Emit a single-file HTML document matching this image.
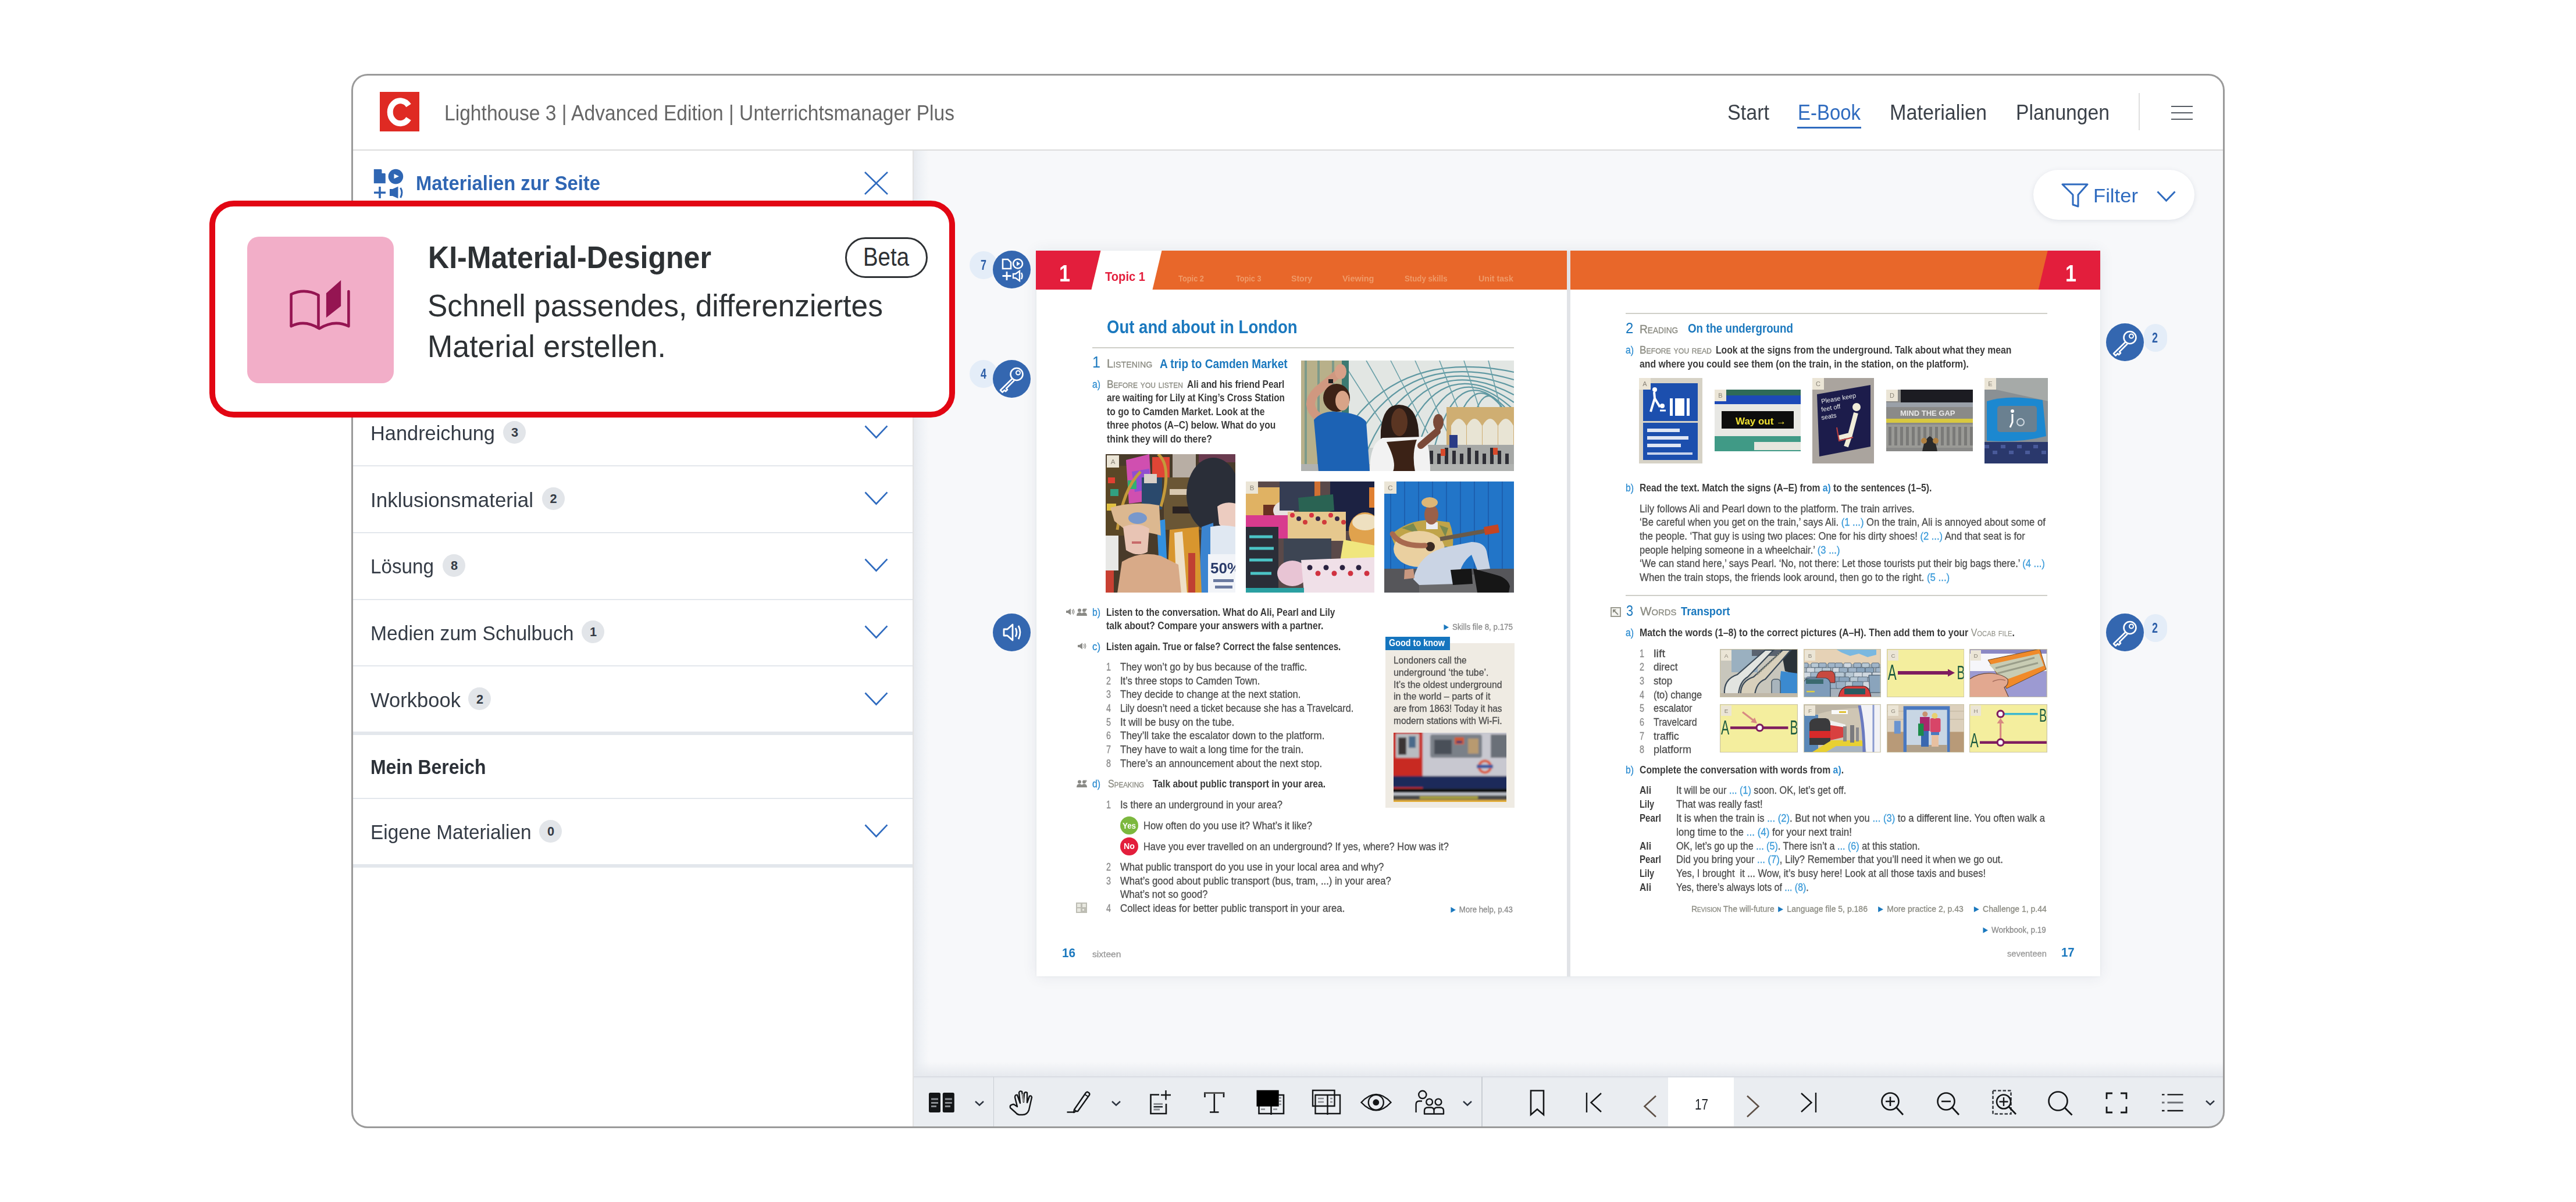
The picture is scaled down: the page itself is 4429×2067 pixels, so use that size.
<!DOCTYPE html>
<html><head><meta charset="utf-8"><style>
html,body{margin:0;padding:0;width:4429px;height:2067px;overflow:hidden;background:#fff;}
body{position:relative;font-family:"Liberation Sans",sans-serif;}
svg{position:absolute;overflow:visible}
</style></head><body>
<div style="position:absolute;left:604px;top:127px;width:3221px;height:1813px;background:#fff;border-radius:28px;"></div>
<div style="position:absolute;left:1571px;top:259px;width:2252px;height:1592px;background:#f7f8fa;"></div>
<div style="position:absolute;left:1571px;top:259px;width:26px;height:1592px;background:linear-gradient(90deg,#e6e9ee,#eef1f5 40%,rgba(247,248,250,0));"></div>
<div style="position:absolute;left:606px;top:257px;width:3217px;height:2px;background:#dcdcdc;"></div>
<div style="position:absolute;left:1569px;top:259px;width:2px;height:1679px;background:#e2e2e2;"></div>
<div style="position:absolute;left:1571px;top:1826px;width:2252px;height:25px;background:linear-gradient(180deg,rgba(230,234,239,0),#e6e9ee);"></div>
<div style="position:absolute;left:1571px;top:1851px;width:2252px;height:87px;background:#eaedf1;border-bottom-right-radius:26px;"></div>
<div style="position:absolute;left:1571px;top:1851px;width:2252px;height:1px;background:#d3d7dd;"></div>
<div style="position:absolute;left:1571px;top:1852px;width:2252px;height:2px;background:#e4e7ec;"></div>
<div style="position:absolute;left:653px;top:158px;width:68px;height:68px;background:#df2a23;"></div>
<svg style="left:653px;top:158px;" width="68" height="68" viewBox="0 0 68 68"><path d="M49.5 23.5 A17.5 19.5 0 1 0 49.5 46" fill="none" stroke="#fff" stroke-width="10"/></svg>
<div style="position:absolute;left:764px;top:176.80px;font-family:'Liberation Sans';font-size:36.23px;line-height:36.23px;font-weight:400;font-style:normal;color:#666666;white-space:pre;transform:scaleX(0.9281);transform-origin:0 0;">Lighthouse 3 | Advanced Edition | Unterrichtsmanager Plus</div>
<div style="position:absolute;left:2970px;top:176.39px;font-family:'Liberation Sans';font-size:36.96px;line-height:36.96px;font-weight:400;font-style:normal;color:#3b4149;white-space:pre;transform:scaleX(0.9225);transform-origin:0 0;">Start</div>
<div style="position:absolute;left:3091px;top:176.39px;font-family:'Liberation Sans';font-size:36.96px;line-height:36.96px;font-weight:400;font-style:normal;color:#2f6bbf;white-space:pre;transform:scaleX(0.8912);transform-origin:0 0;">E-Book</div>
<div style="position:absolute;left:3090px;top:218px;width:110px;height:3px;background:#2f6bbf;"></div>
<div style="position:absolute;left:3249px;top:176.39px;font-family:'Liberation Sans';font-size:36.96px;line-height:36.96px;font-weight:400;font-style:normal;color:#3b4149;white-space:pre;transform:scaleX(0.9239);transform-origin:0 0;">Materialien</div>
<div style="position:absolute;left:3466px;top:176.39px;font-family:'Liberation Sans';font-size:36.96px;line-height:36.96px;font-weight:400;font-style:normal;color:#3b4149;white-space:pre;transform:scaleX(0.9111);transform-origin:0 0;">Planungen</div>
<div style="position:absolute;left:3677px;top:160px;width:2px;height:64px;background:#dedede;"></div>
<div style="position:absolute;left:3733px;top:182px;width:37px;height:2px;background:#555b63;"></div>
<div style="position:absolute;left:3733px;top:193px;width:37px;height:2px;background:#555b63;"></div>
<div style="position:absolute;left:3733px;top:204px;width:37px;height:2px;background:#555b63;"></div>
<svg style="left:642px;top:291px;" width="53" height="51" viewBox="0 0 53 51"><path d="M0.8 0 H13.5 L20.8 8 V24.2 H0.8 Z" fill="#2f66b3"/><path d="M14.5 0 L21 7 H14.5 Z" fill="#fff"/><circle cx="38.4" cy="12.6" r="12.8" fill="#2f66b3"/><path d="M35.5 8 L44 12.2 L35.5 16.2 Z" fill="#fff"/><path d="M11 30 V50 M1 40.2 H21" stroke="#2f66b3" stroke-width="3.6"/><path d="M28 34 H33 L42.5 29.8 V50.2 L33 46 H28 Z" fill="#2f66b3"/><path d="M46.5 32 Q51.5 40 46.5 49" fill="none" stroke="#2f66b3" stroke-width="3"/></svg>
<div style="position:absolute;left:715px;top:298.10px;font-family:'Liberation Sans';font-size:35.65px;line-height:35.65px;font-weight:700;font-style:normal;color:#2f66b3;white-space:pre;transform:scaleX(0.9198);transform-origin:0 0;">Materialien zur Seite</div>
<svg style="left:1486px;top:295px;" width="41" height="40" viewBox="0 0 41 40"><path d="M1 1 L40 39 M40 1 L1 39" stroke="#2f6bbf" stroke-width="2.6"/></svg>
<div style="position:absolute;left:637.4px;top:728.23px;font-family:'Liberation Sans';font-size:34.78px;line-height:34.78px;font-weight:400;font-style:normal;color:#343b45;white-space:pre;transform:scaleX(0.9885);transform-origin:0 0;">Handreichung</div>
<div style="position:absolute;left:865px;top:723.5px;width:39px;height:39px;background:#e2e5e9;border-radius:50%;"></div>
<div style="position:absolute;left:879px;top:732.82px;font-family:'Liberation Sans';font-size:21.74px;line-height:21.74px;font-weight:700;font-style:normal;color:#343b45;white-space:pre;">3</div>
<svg style="left:1486px;top:731px;" width="41" height="24" viewBox="0 0 41 24"><path d="M1.5 1.5 L20.5 21.5 L39.5 1.5" fill="none" stroke="#2f6bbf" stroke-width="2.6"/></svg>
<div style="position:absolute;left:637.4px;top:842.63px;font-family:'Liberation Sans';font-size:34.78px;line-height:34.78px;font-weight:400;font-style:normal;color:#343b45;white-space:pre;transform:scaleX(1.0063);transform-origin:0 0;">Inklusionsmaterial</div>
<div style="position:absolute;left:931.5px;top:837.9px;width:39px;height:39px;background:#e2e5e9;border-radius:50%;"></div>
<div style="position:absolute;left:945.5px;top:847.22px;font-family:'Liberation Sans';font-size:21.74px;line-height:21.74px;font-weight:700;font-style:normal;color:#343b45;white-space:pre;">2</div>
<svg style="left:1486px;top:845.4px;" width="41" height="24" viewBox="0 0 41 24"><path d="M1.5 1.5 L20.5 21.5 L39.5 1.5" fill="none" stroke="#2f6bbf" stroke-width="2.6"/></svg>
<div style="position:absolute;left:637.4px;top:957.23px;font-family:'Liberation Sans';font-size:34.78px;line-height:34.78px;font-weight:400;font-style:normal;color:#343b45;white-space:pre;transform:scaleX(0.9556);transform-origin:0 0;">Lösung</div>
<div style="position:absolute;left:761px;top:952.5px;width:39px;height:39px;background:#e2e5e9;border-radius:50%;"></div>
<div style="position:absolute;left:775px;top:961.82px;font-family:'Liberation Sans';font-size:21.74px;line-height:21.74px;font-weight:700;font-style:normal;color:#343b45;white-space:pre;">8</div>
<svg style="left:1486px;top:960px;" width="41" height="24" viewBox="0 0 41 24"><path d="M1.5 1.5 L20.5 21.5 L39.5 1.5" fill="none" stroke="#2f6bbf" stroke-width="2.6"/></svg>
<div style="position:absolute;left:637.4px;top:1071.73px;font-family:'Liberation Sans';font-size:34.78px;line-height:34.78px;font-weight:400;font-style:normal;color:#343b45;white-space:pre;transform:scaleX(0.9671);transform-origin:0 0;">Medien zum Schulbuch</div>
<div style="position:absolute;left:1000px;top:1067.0px;width:39px;height:39px;background:#e2e5e9;border-radius:50%;"></div>
<div style="position:absolute;left:1014px;top:1076.32px;font-family:'Liberation Sans';font-size:21.74px;line-height:21.74px;font-weight:700;font-style:normal;color:#343b45;white-space:pre;">1</div>
<svg style="left:1486px;top:1074.5px;" width="41" height="24" viewBox="0 0 41 24"><path d="M1.5 1.5 L20.5 21.5 L39.5 1.5" fill="none" stroke="#2f6bbf" stroke-width="2.6"/></svg>
<div style="position:absolute;left:637.4px;top:1186.93px;font-family:'Liberation Sans';font-size:34.78px;line-height:34.78px;font-weight:400;font-style:normal;color:#343b45;white-space:pre;transform:scaleX(0.9944);transform-origin:0 0;">Workbook</div>
<div style="position:absolute;left:805px;top:1182.2px;width:39px;height:39px;background:#e2e5e9;border-radius:50%;"></div>
<div style="position:absolute;left:819px;top:1191.52px;font-family:'Liberation Sans';font-size:21.74px;line-height:21.74px;font-weight:700;font-style:normal;color:#343b45;white-space:pre;">2</div>
<svg style="left:1486px;top:1189.7px;" width="41" height="24" viewBox="0 0 41 24"><path d="M1.5 1.5 L20.5 21.5 L39.5 1.5" fill="none" stroke="#2f6bbf" stroke-width="2.6"/></svg>
<div style="position:absolute;left:606px;top:685px;width:963px;height:2px;background:#e3e7ec;"></div>
<div style="position:absolute;left:606px;top:800px;width:963px;height:2px;background:#e3e7ec;"></div>
<div style="position:absolute;left:606px;top:915px;width:963px;height:2px;background:#e3e7ec;"></div>
<div style="position:absolute;left:606px;top:1030px;width:963px;height:2px;background:#e3e7ec;"></div>
<div style="position:absolute;left:606px;top:1144px;width:963px;height:2px;background:#e3e7ec;"></div>
<div style="position:absolute;left:606px;top:1258px;width:963px;height:6px;background:#e3e7ec;"></div>
<div style="position:absolute;left:637.4px;top:1302.23px;font-family:'Liberation Sans';font-size:34.78px;line-height:34.78px;font-weight:700;font-style:normal;color:#2b3037;white-space:pre;transform:scaleX(0.9178);transform-origin:0 0;">Mein Bereich</div>
<div style="position:absolute;left:606px;top:1372px;width:963px;height:2px;background:#e3e7ec;"></div>
<div style="position:absolute;left:637.4px;top:1414.23px;font-family:'Liberation Sans';font-size:34.78px;line-height:34.78px;font-weight:400;font-style:normal;color:#343b45;white-space:pre;transform:scaleX(0.9605);transform-origin:0 0;">Eigene Materialien</div>
<div style="position:absolute;left:927px;top:1409.5px;width:39px;height:39px;background:#e2e5e9;border-radius:50%;"></div>
<div style="position:absolute;left:941px;top:1418.82px;font-family:'Liberation Sans';font-size:21.74px;line-height:21.74px;font-weight:700;font-style:normal;color:#343b45;white-space:pre;">0</div>
<svg style="left:1486px;top:1417px;" width="41" height="24" viewBox="0 0 41 24"><path d="M1.5 1.5 L20.5 21.5 L39.5 1.5" fill="none" stroke="#2f6bbf" stroke-width="2.6"/></svg>
<div style="position:absolute;left:606px;top:1486px;width:963px;height:6px;background:#e3e7ec;"></div>
<div style="position:absolute;left:1781.5px;top:431.5px;width:1829.2px;height:1247.8px;background:#e1e3e7;box-shadow:0 0 3px rgba(30,40,60,0.07),0 0 24px rgba(40,60,90,0.09);"></div>
<div style="position:absolute;left:1781.5px;top:431.5px;width:912px;height:1247.8px;background:#fff;"></div>
<div style="position:absolute;left:2699.5px;top:431.5px;width:911.2px;height:1247.8px;background:#fff;"></div>
<svg style="left:1781px;top:431px;" width="913" height="67" viewBox="0 0 913 67"><rect x="0" y="0" width="913" height="67" fill="#e8672a"/><polygon points="0,0 111.5,0 95.5,67 0,67" fill="#e31e3c"/><polygon points="111.5,0 216.5,0 200.5,67 95.5,67" fill="#fff"/></svg>
<div style="position:absolute;left:1821px;top:451.22px;font-family:'Liberation Sans';font-size:39.86px;line-height:39.86px;font-weight:700;font-style:normal;color:#fff;white-space:pre;transform:scaleX(0.8569);transform-origin:0 0;">1</div>
<div style="position:absolute;left:1900px;top:465.11px;font-family:'Liberation Sans';font-size:22.46px;line-height:22.46px;font-weight:700;font-style:normal;color:#e31e3c;white-space:pre;transform:scaleX(0.8968);transform-origin:0 0;">Topic 1</div>
<div style="position:absolute;left:2026px;top:471.88px;font-family:'Liberation Sans';font-size:14.49px;line-height:14.49px;font-weight:700;font-style:normal;color:#ef9a68;white-space:pre;transform:scaleX(0.8864);transform-origin:0 0;">Topic 2</div>
<div style="position:absolute;left:2124.5px;top:471.88px;font-family:'Liberation Sans';font-size:14.49px;line-height:14.49px;font-weight:700;font-style:normal;color:#ef9a68;white-space:pre;transform:scaleX(0.8763);transform-origin:0 0;">Topic 3</div>
<div style="position:absolute;left:2220px;top:471.88px;font-family:'Liberation Sans';font-size:14.49px;line-height:14.49px;font-weight:700;font-style:normal;color:#ef9a68;white-space:pre;transform:scaleX(0.9722);transform-origin:0 0;">Story</div>
<div style="position:absolute;left:2307.7px;top:471.88px;font-family:'Liberation Sans';font-size:14.49px;line-height:14.49px;font-weight:700;font-style:normal;color:#ef9a68;white-space:pre;transform:scaleX(0.9969);transform-origin:0 0;">Viewing</div>
<div style="position:absolute;left:2414.5px;top:471.88px;font-family:'Liberation Sans';font-size:14.49px;line-height:14.49px;font-weight:700;font-style:normal;color:#ef9a68;white-space:pre;transform:scaleX(0.9130);transform-origin:0 0;">Study skills</div>
<div style="position:absolute;left:2541.7px;top:471.88px;font-family:'Liberation Sans';font-size:14.49px;line-height:14.49px;font-weight:700;font-style:normal;color:#ef9a68;white-space:pre;transform:scaleX(0.9792);transform-origin:0 0;">Unit task</div>
<svg style="left:2700px;top:431px;" width="911" height="67" viewBox="0 0 911 67"><rect x="0" y="0" width="911" height="67" fill="#e8672a"/><polygon points="820.7,0 911,0 911,67 804.7,67" fill="#e31e3c"/></svg>
<div style="position:absolute;left:3551px;top:451.22px;font-family:'Liberation Sans';font-size:39.86px;line-height:39.86px;font-weight:700;font-style:normal;color:#fff;white-space:pre;transform:scaleX(0.8569);transform-origin:0 0;">1</div>
<div style="position:absolute;left:1667px;top:431.5px;width:48px;height:48px;background:#e4edf8;border-radius:50%;"></div>
<div style="position:absolute;left:1686px;top:444.59px;font-family:'Liberation Sans';font-size:23.19px;line-height:23.19px;font-weight:700;font-style:normal;color:#2c5ea8;white-space:pre;transform:scaleX(0.7748);transform-origin:0 0;">7</div>
<div style="position:absolute;left:1707px;top:431px;width:65px;height:65px;background:#3467b0;border-radius:50%;"></div>
<svg style="left:1707px;top:431px;" width="65" height="65" viewBox="0 0 65 65"><path d="M17 15 H26 L31 20 V31 H17 Z" fill="none" stroke="#fff" stroke-width="2.6"/><circle cx="43" cy="22.5" r="8" fill="none" stroke="#fff" stroke-width="2.6"/><path d="M41 18.5 L47 22.5 L41 26.5 Z" fill="#fff"/><path d="M24 36 V51 M16.5 43.5 H31.5" stroke="#fff" stroke-width="2.8"/><path d="M35 40 H39 L46 35 V52 L39 47 H35 Z" fill="none" stroke="#fff" stroke-width="2.4"/><path d="M49 38 Q52 43.5 49 49" fill="none" stroke="#fff" stroke-width="2.4"/></svg>
<div style="position:absolute;left:1667px;top:619px;width:48px;height:48px;background:#e4edf8;border-radius:50%;"></div>
<div style="position:absolute;left:1686px;top:632.09px;font-family:'Liberation Sans';font-size:23.19px;line-height:23.19px;font-weight:700;font-style:normal;color:#2c5ea8;white-space:pre;transform:scaleX(0.7748);transform-origin:0 0;">4</div>
<div style="position:absolute;left:1707px;top:619px;width:65px;height:65px;background:#3467b0;border-radius:50%;"></div>
<svg style="left:1707px;top:619px;" width="65" height="65" viewBox="0 0 65 65"><circle cx="41" cy="24.5" r="10.5" fill="none" stroke="#fff" stroke-width="2.6"/><circle cx="43.5" cy="22" r="3.5" fill="none" stroke="#fff" stroke-width="2"/><path d="M33.5 32 L13 52 L16.5 55.5 L20 52 L22 54 L25 51 L23 49 L37 35" fill="none" stroke="#fff" stroke-width="2.6" stroke-linejoin="round"/></svg>
<div style="position:absolute;left:1707px;top:1055px;width:65px;height:65px;background:#3467b0;border-radius:50%;"></div>
<svg style="left:1707px;top:1055px;" width="65" height="65" viewBox="0 0 65 65"><path d="M19 27 H25 L34 19 V46 L25 38 H19 Z" fill="none" stroke="#fff" stroke-width="2.8" stroke-linejoin="round"/><path d="M39 25 Q43 32.5 39 40 M44 21 Q50 32.5 44 44" fill="none" stroke="#fff" stroke-width="2.8"/></svg>
<div style="position:absolute;left:3685.6px;top:556.7px;width:40px;height:48px;background:#e4edf8;border-radius:20px;"></div>
<div style="position:absolute;left:3699.6px;top:569.79px;font-family:'Liberation Sans';font-size:23.19px;line-height:23.19px;font-weight:700;font-style:normal;color:#2c5ea8;white-space:pre;transform:scaleX(0.7748);transform-origin:0 0;">2</div>
<div style="position:absolute;left:3620.5px;top:556px;width:65px;height:65px;background:#3467b0;border-radius:50%;"></div>
<svg style="left:3620.5px;top:556px;" width="65" height="65" viewBox="0 0 65 65"><circle cx="41" cy="24.5" r="10.5" fill="none" stroke="#fff" stroke-width="2.6"/><circle cx="43.5" cy="22" r="3.5" fill="none" stroke="#fff" stroke-width="2"/><path d="M33.5 32 L13 52 L16.5 55.5 L20 52 L22 54 L25 51 L23 49 L37 35" fill="none" stroke="#fff" stroke-width="2.6" stroke-linejoin="round"/></svg>
<div style="position:absolute;left:3685.6px;top:1056px;width:40px;height:48px;background:#e4edf8;border-radius:20px;"></div>
<div style="position:absolute;left:3699.6px;top:1069.09px;font-family:'Liberation Sans';font-size:23.19px;line-height:23.19px;font-weight:700;font-style:normal;color:#2c5ea8;white-space:pre;transform:scaleX(0.7748);transform-origin:0 0;">2</div>
<div style="position:absolute;left:3620.5px;top:1055px;width:65px;height:65px;background:#3467b0;border-radius:50%;"></div>
<svg style="left:3620.5px;top:1055px;" width="65" height="65" viewBox="0 0 65 65"><circle cx="41" cy="24.5" r="10.5" fill="none" stroke="#fff" stroke-width="2.6"/><circle cx="43.5" cy="22" r="3.5" fill="none" stroke="#fff" stroke-width="2"/><path d="M33.5 32 L13 52 L16.5 55.5 L20 52 L22 54 L25 51 L23 49 L37 35" fill="none" stroke="#fff" stroke-width="2.6" stroke-linejoin="round"/></svg>
<div style="position:absolute;left:1902.6px;top:546.54px;font-family:'Liberation Sans';font-size:31.59px;line-height:31.59px;font-weight:700;font-style:normal;color:#1a78be;white-space:pre;transform:scaleX(0.8728);transform-origin:0 0;">Out and about in London</div>
<div style="position:absolute;left:1877.7px;top:596.6px;width:725px;height:2px;background:#cfcfc8;"></div>
<div style="position:absolute;left:1877.7px;top:609.39px;font-family:'Liberation Sans';font-size:27.54px;line-height:27.54px;font-weight:400;font-style:normal;color:#1a78be;white-space:pre;transform:scaleX(0.9143);transform-origin:0 0;">1</div>
<div style="position:absolute;left:1902.6px;top:616.05px;-webkit-text-stroke:0.3px currentColor;font-family:'Liberation Sans';font-size:19.71px;line-height:19.71px;font-weight:400;font-style:normal;color:#8a8a80;white-space:pre;transform:scaleX(1.0151);transform-origin:0 0;font-variant:small-caps;">Listening</div>
<div style="position:absolute;left:1994px;top:614.81px;font-family:'Liberation Sans';font-size:21.16px;line-height:21.16px;font-weight:700;font-style:normal;color:#1a78be;white-space:pre;transform:scaleX(0.9010);transform-origin:0 0;">A trip to Camden Market</div>
<div style="position:absolute;left:1877.7px;top:652.21px;-webkit-text-stroke:0.3px currentColor;font-family:'Liberation Sans';font-size:18.70px;line-height:18.70px;font-weight:400;font-style:normal;color:#2b8bd0;white-space:pre;transform:scaleX(0.8421);transform-origin:0 0;">a)</div>
<div style="position:absolute;left:1902.6px;top:652.21px;-webkit-text-stroke:0.3px currentColor;font-family:'Liberation Sans';font-size:18.70px;line-height:18.70px;font-weight:400;font-style:normal;color:#8a8a80;white-space:pre;transform:scaleX(0.9267);transform-origin:0 0;font-variant:small-caps;">Before you listen</div>
<div style="position:absolute;left:2041px;top:652.21px;font-family:'Liberation Sans';font-size:18.70px;line-height:18.70px;font-weight:700;font-style:normal;color:#3a3a3a;white-space:pre;transform:scaleX(0.8267);transform-origin:0 0;">Ali and his friend Pearl</div>
<div style="position:absolute;left:1902.6px;top:675.11px;font-family:'Liberation Sans';font-size:18.70px;line-height:18.70px;font-weight:700;font-style:normal;color:#3a3a3a;white-space:pre;transform:scaleX(0.8150);transform-origin:0 0;">are waiting for Lily at King’s Cross Station</div>
<div style="position:absolute;left:1902.6px;top:698.91px;font-family:'Liberation Sans';font-size:18.70px;line-height:18.70px;font-weight:700;font-style:normal;color:#3a3a3a;white-space:pre;transform:scaleX(0.8405);transform-origin:0 0;">to go to Camden Market. Look at the</div>
<div style="position:absolute;left:1902.6px;top:722.41px;font-family:'Liberation Sans';font-size:18.70px;line-height:18.70px;font-weight:700;font-style:normal;color:#3a3a3a;white-space:pre;transform:scaleX(0.8336);transform-origin:0 0;">three photos (A–C) below. What do you</div>
<div style="position:absolute;left:1902.6px;top:745.91px;font-family:'Liberation Sans';font-size:18.70px;line-height:18.70px;font-weight:700;font-style:normal;color:#3a3a3a;white-space:pre;transform:scaleX(0.8462);transform-origin:0 0;">think they will do there?</div>
<div style="position:absolute;left:1877.5px;top:1043.88px;-webkit-text-stroke:0.3px currentColor;font-family:'Liberation Sans';font-size:18.26px;line-height:18.26px;font-weight:400;font-style:normal;color:#2b8bd0;white-space:pre;transform:scaleX(0.8624);transform-origin:0 0;">b)</div>
<div style="position:absolute;left:1901.7px;top:1043.88px;font-family:'Liberation Sans';font-size:18.26px;line-height:18.26px;font-weight:700;font-style:normal;color:#3a3a3a;white-space:pre;transform:scaleX(0.8444);transform-origin:0 0;">Listen to the conversation. What do Ali, Pearl and Lily</div>
<div style="position:absolute;left:1901.7px;top:1067.28px;font-family:'Liberation Sans';font-size:18.26px;line-height:18.26px;font-weight:700;font-style:normal;color:#3a3a3a;white-space:pre;transform:scaleX(0.8620);transform-origin:0 0;">talk about? Compare your answers with a partner.</div>
<div style="position:absolute;left:2480px;top:1069.87px;-webkit-text-stroke:0.3px currentColor;font-family:'Liberation Sans';font-size:15.22px;line-height:15.22px;font-weight:400;font-style:normal;color:#8a8a8a;white-space:pre;transform:scaleX(0.8784);transform-origin:0 0;"><span style="color:#1a78be">►</span> Skills file 8, p.175</div>
<div style="position:absolute;left:1877.5px;top:1102.88px;-webkit-text-stroke:0.3px currentColor;font-family:'Liberation Sans';font-size:18.26px;line-height:18.26px;font-weight:400;font-style:normal;color:#2b8bd0;white-space:pre;transform:scaleX(0.9209);transform-origin:0 0;">c)</div>
<div style="position:absolute;left:1901.7px;top:1102.88px;font-family:'Liberation Sans';font-size:18.26px;line-height:18.26px;font-weight:700;font-style:normal;color:#3a3a3a;white-space:pre;transform:scaleX(0.8319);transform-origin:0 0;">Listen again. True or false? Correct the false sentences.</div>
<div style="position:absolute;left:1902.3px;top:1137.98px;-webkit-text-stroke:0.3px currentColor;font-family:'Liberation Sans';font-size:18.26px;line-height:18.26px;font-weight:400;font-style:normal;color:#8a8a8a;white-space:pre;transform:scaleX(0.7877);transform-origin:0 0;">1</div>
<div style="position:absolute;left:1925.6px;top:1137.98px;-webkit-text-stroke:0.3px currentColor;font-family:'Liberation Sans';font-size:18.26px;line-height:18.26px;font-weight:400;font-style:normal;color:#4c4c4c;white-space:pre;transform:scaleX(0.9139);transform-origin:0 0;">They won’t go by bus because of the traffic.</div>
<div style="position:absolute;left:1902.3px;top:1161.64px;-webkit-text-stroke:0.3px currentColor;font-family:'Liberation Sans';font-size:18.26px;line-height:18.26px;font-weight:400;font-style:normal;color:#8a8a8a;white-space:pre;transform:scaleX(0.7877);transform-origin:0 0;">2</div>
<div style="position:absolute;left:1925.6px;top:1161.64px;-webkit-text-stroke:0.3px currentColor;font-family:'Liberation Sans';font-size:18.26px;line-height:18.26px;font-weight:400;font-style:normal;color:#4c4c4c;white-space:pre;transform:scaleX(0.9068);transform-origin:0 0;">It’s three stops to Camden Town.</div>
<div style="position:absolute;left:1902.3px;top:1185.30px;-webkit-text-stroke:0.3px currentColor;font-family:'Liberation Sans';font-size:18.26px;line-height:18.26px;font-weight:400;font-style:normal;color:#8a8a8a;white-space:pre;transform:scaleX(0.7877);transform-origin:0 0;">3</div>
<div style="position:absolute;left:1925.6px;top:1185.30px;-webkit-text-stroke:0.3px currentColor;font-family:'Liberation Sans';font-size:18.26px;line-height:18.26px;font-weight:400;font-style:normal;color:#4c4c4c;white-space:pre;transform:scaleX(0.9160);transform-origin:0 0;">They decide to change at the next station.</div>
<div style="position:absolute;left:1902.3px;top:1208.96px;-webkit-text-stroke:0.3px currentColor;font-family:'Liberation Sans';font-size:18.26px;line-height:18.26px;font-weight:400;font-style:normal;color:#8a8a8a;white-space:pre;transform:scaleX(0.7877);transform-origin:0 0;">4</div>
<div style="position:absolute;left:1925.6px;top:1208.96px;-webkit-text-stroke:0.3px currentColor;font-family:'Liberation Sans';font-size:18.26px;line-height:18.26px;font-weight:400;font-style:normal;color:#4c4c4c;white-space:pre;transform:scaleX(0.8847);transform-origin:0 0;">Lily doesn’t need a ticket because she has a Travelcard.</div>
<div style="position:absolute;left:1902.3px;top:1232.62px;-webkit-text-stroke:0.3px currentColor;font-family:'Liberation Sans';font-size:18.26px;line-height:18.26px;font-weight:400;font-style:normal;color:#8a8a8a;white-space:pre;transform:scaleX(0.7877);transform-origin:0 0;">5</div>
<div style="position:absolute;left:1925.6px;top:1232.62px;-webkit-text-stroke:0.3px currentColor;font-family:'Liberation Sans';font-size:18.26px;line-height:18.26px;font-weight:400;font-style:normal;color:#4c4c4c;white-space:pre;transform:scaleX(0.9303);transform-origin:0 0;">It will be busy on the tube.</div>
<div style="position:absolute;left:1902.3px;top:1256.28px;-webkit-text-stroke:0.3px currentColor;font-family:'Liberation Sans';font-size:18.26px;line-height:18.26px;font-weight:400;font-style:normal;color:#8a8a8a;white-space:pre;transform:scaleX(0.7877);transform-origin:0 0;">6</div>
<div style="position:absolute;left:1925.6px;top:1256.28px;-webkit-text-stroke:0.3px currentColor;font-family:'Liberation Sans';font-size:18.26px;line-height:18.26px;font-weight:400;font-style:normal;color:#4c4c4c;white-space:pre;transform:scaleX(0.9312);transform-origin:0 0;">They’ll take the escalator down to the platform.</div>
<div style="position:absolute;left:1902.3px;top:1279.94px;-webkit-text-stroke:0.3px currentColor;font-family:'Liberation Sans';font-size:18.26px;line-height:18.26px;font-weight:400;font-style:normal;color:#8a8a8a;white-space:pre;transform:scaleX(0.7877);transform-origin:0 0;">7</div>
<div style="position:absolute;left:1925.6px;top:1279.94px;-webkit-text-stroke:0.3px currentColor;font-family:'Liberation Sans';font-size:18.26px;line-height:18.26px;font-weight:400;font-style:normal;color:#4c4c4c;white-space:pre;transform:scaleX(0.9275);transform-origin:0 0;">They have to wait a long time for the train.</div>
<div style="position:absolute;left:1902.3px;top:1303.60px;-webkit-text-stroke:0.3px currentColor;font-family:'Liberation Sans';font-size:18.26px;line-height:18.26px;font-weight:400;font-style:normal;color:#8a8a8a;white-space:pre;transform:scaleX(0.7877);transform-origin:0 0;">8</div>
<div style="position:absolute;left:1925.6px;top:1303.60px;-webkit-text-stroke:0.3px currentColor;font-family:'Liberation Sans';font-size:18.26px;line-height:18.26px;font-weight:400;font-style:normal;color:#4c4c4c;white-space:pre;transform:scaleX(0.9207);transform-origin:0 0;">There’s an announcement about the next stop.</div>
<div style="position:absolute;left:2381.5px;top:1105.5px;width:222.5px;height:283.5px;background:#efebe3;"></div>
<div style="position:absolute;left:2381.5px;top:1095.2px;width:111.8px;height:22.4px;background:#1575be;"></div>
<div style="position:absolute;left:2388px;top:1097.63px;font-family:'Liberation Sans';font-size:16.67px;line-height:16.67px;font-weight:700;font-style:normal;color:#fff;white-space:pre;transform:scaleX(0.8646);transform-origin:0 0;">Good to know</div>
<div style="position:absolute;left:2395.5px;top:1127.71px;-webkit-text-stroke:0.3px currentColor;font-family:'Liberation Sans';font-size:16.81px;line-height:16.81px;font-weight:400;font-style:normal;color:#4c4c4c;white-space:pre;transform:scaleX(0.9142);transform-origin:0 0;">Londoners call the</div>
<div style="position:absolute;left:2395.5px;top:1148.63px;-webkit-text-stroke:0.3px currentColor;font-family:'Liberation Sans';font-size:16.81px;line-height:16.81px;font-weight:400;font-style:normal;color:#4c4c4c;white-space:pre;transform:scaleX(0.9463);transform-origin:0 0;">underground ‘the tube’.</div>
<div style="position:absolute;left:2395.5px;top:1169.55px;-webkit-text-stroke:0.3px currentColor;font-family:'Liberation Sans';font-size:16.81px;line-height:16.81px;font-weight:400;font-style:normal;color:#4c4c4c;white-space:pre;transform:scaleX(0.9391);transform-origin:0 0;">It’s the oldest underground</div>
<div style="position:absolute;left:2395.5px;top:1190.47px;-webkit-text-stroke:0.3px currentColor;font-family:'Liberation Sans';font-size:16.81px;line-height:16.81px;font-weight:400;font-style:normal;color:#4c4c4c;white-space:pre;transform:scaleX(0.9588);transform-origin:0 0;">in the world – parts of it</div>
<div style="position:absolute;left:2395.5px;top:1211.39px;-webkit-text-stroke:0.3px currentColor;font-family:'Liberation Sans';font-size:16.81px;line-height:16.81px;font-weight:400;font-style:normal;color:#4c4c4c;white-space:pre;transform:scaleX(0.9177);transform-origin:0 0;">are from 1863! Today it has</div>
<div style="position:absolute;left:2395.5px;top:1232.31px;-webkit-text-stroke:0.3px currentColor;font-family:'Liberation Sans';font-size:16.81px;line-height:16.81px;font-weight:400;font-style:normal;color:#4c4c4c;white-space:pre;transform:scaleX(0.9208);transform-origin:0 0;">modern stations with Wi-Fi.</div>
<div style="position:absolute;left:1877.5px;top:1339.48px;-webkit-text-stroke:0.3px currentColor;font-family:'Liberation Sans';font-size:18.26px;line-height:18.26px;font-weight:400;font-style:normal;color:#2b8bd0;white-space:pre;transform:scaleX(0.8624);transform-origin:0 0;">d)</div>
<div style="position:absolute;left:1905.4px;top:1339.48px;-webkit-text-stroke:0.3px currentColor;font-family:'Liberation Sans';font-size:18.26px;line-height:18.26px;font-weight:400;font-style:normal;color:#8a8a80;white-space:pre;transform:scaleX(0.8856);transform-origin:0 0;font-variant:small-caps;">Speaking</div>
<div style="position:absolute;left:1982px;top:1339.48px;font-family:'Liberation Sans';font-size:18.26px;line-height:18.26px;font-weight:700;font-style:normal;color:#3a3a3a;white-space:pre;transform:scaleX(0.8547);transform-origin:0 0;">Talk about public transport in your area.</div>
<div style="position:absolute;left:1902.3px;top:1375.18px;-webkit-text-stroke:0.3px currentColor;font-family:'Liberation Sans';font-size:18.26px;line-height:18.26px;font-weight:400;font-style:normal;color:#8a8a8a;white-space:pre;transform:scaleX(0.7877);transform-origin:0 0;">1</div>
<div style="position:absolute;left:1925.6px;top:1375.18px;-webkit-text-stroke:0.3px currentColor;font-family:'Liberation Sans';font-size:18.26px;line-height:18.26px;font-weight:400;font-style:normal;color:#4c4c4c;white-space:pre;transform:scaleX(0.9106);transform-origin:0 0;">Is there an underground in your area?</div>
<div style="position:absolute;left:1925.6px;top:1403.9px;width:31px;height:31px;background:#7cb83e;border-radius:50%;"></div>
<div style="position:absolute;left:1929.5px;top:1411.87px;font-family:'Liberation Sans';font-size:15.22px;line-height:15.22px;font-weight:700;font-style:normal;color:#fff;white-space:pre;transform:scaleX(0.8762);transform-origin:0 0;">Yes</div>
<div style="position:absolute;left:1966px;top:1410.88px;-webkit-text-stroke:0.3px currentColor;font-family:'Liberation Sans';font-size:18.26px;line-height:18.26px;font-weight:400;font-style:normal;color:#4c4c4c;white-space:pre;transform:scaleX(0.9114);transform-origin:0 0;">How often do you use it? What’s it like?</div>
<div style="position:absolute;left:1925.6px;top:1439.5px;width:31px;height:31px;background:#e31e3c;border-radius:50%;"></div>
<div style="position:absolute;left:1931.5px;top:1447.47px;font-family:'Liberation Sans';font-size:15.22px;line-height:15.22px;font-weight:700;font-style:normal;color:#fff;white-space:pre;transform:scaleX(0.9361);transform-origin:0 0;">No</div>
<div style="position:absolute;left:1966px;top:1446.58px;-webkit-text-stroke:0.3px currentColor;font-family:'Liberation Sans';font-size:18.26px;line-height:18.26px;font-weight:400;font-style:normal;color:#4c4c4c;white-space:pre;transform:scaleX(0.8997);transform-origin:0 0;">Have you ever travelled on an underground? If yes, where? How was it?</div>
<div style="position:absolute;left:1902.3px;top:1481.68px;-webkit-text-stroke:0.3px currentColor;font-family:'Liberation Sans';font-size:18.26px;line-height:18.26px;font-weight:400;font-style:normal;color:#8a8a8a;white-space:pre;transform:scaleX(0.7877);transform-origin:0 0;">2</div>
<div style="position:absolute;left:1925.6px;top:1481.68px;-webkit-text-stroke:0.3px currentColor;font-family:'Liberation Sans';font-size:18.26px;line-height:18.26px;font-weight:400;font-style:normal;color:#4c4c4c;white-space:pre;transform:scaleX(0.9177);transform-origin:0 0;">What public transport do you use in your local area and why?</div>
<div style="position:absolute;left:1902.3px;top:1505.58px;-webkit-text-stroke:0.3px currentColor;font-family:'Liberation Sans';font-size:18.26px;line-height:18.26px;font-weight:400;font-style:normal;color:#8a8a8a;white-space:pre;transform:scaleX(0.7877);transform-origin:0 0;">3</div>
<div style="position:absolute;left:1925.6px;top:1505.58px;-webkit-text-stroke:0.3px currentColor;font-family:'Liberation Sans';font-size:18.26px;line-height:18.26px;font-weight:400;font-style:normal;color:#4c4c4c;white-space:pre;transform:scaleX(0.9099);transform-origin:0 0;">What’s good about public transport (bus, tram, ...) in your area?</div>
<div style="position:absolute;left:1925.6px;top:1528.88px;-webkit-text-stroke:0.3px currentColor;font-family:'Liberation Sans';font-size:18.26px;line-height:18.26px;font-weight:400;font-style:normal;color:#4c4c4c;white-space:pre;transform:scaleX(0.9057);transform-origin:0 0;">What’s not so good?</div>
<div style="position:absolute;left:1902.3px;top:1553.08px;-webkit-text-stroke:0.3px currentColor;font-family:'Liberation Sans';font-size:18.26px;line-height:18.26px;font-weight:400;font-style:normal;color:#8a8a8a;white-space:pre;transform:scaleX(0.7877);transform-origin:0 0;">4</div>
<div style="position:absolute;left:1925.6px;top:1553.08px;-webkit-text-stroke:0.3px currentColor;font-family:'Liberation Sans';font-size:18.26px;line-height:18.26px;font-weight:400;font-style:normal;color:#4c4c4c;white-space:pre;transform:scaleX(0.9223);transform-origin:0 0;">Collect ideas for better public transport in your area.</div>
<div style="position:absolute;left:2492px;top:1555.67px;-webkit-text-stroke:0.3px currentColor;font-family:'Liberation Sans';font-size:15.22px;line-height:15.22px;font-weight:400;font-style:normal;color:#8a8a8a;white-space:pre;transform:scaleX(0.8716);transform-origin:0 0;"><span style="color:#1a78be">►</span> More help, p.43</div>
<svg style="left:1850.4px;top:1552.3px;" width="19" height="18" viewBox="0 0 19 18"><rect width="19" height="18" fill="#bdbdb4"/><rect x="2" y="2" width="6" height="6" fill="#e8e8e0"/><rect x="11" y="2" width="6" height="6" fill="#e8e8e0"/><rect x="2" y="10" width="6" height="6" fill="#e8e8e0"/><rect x="11" y="11" width="3" height="3" fill="#e8e8e0"/></svg>
<div style="position:absolute;left:1825.6px;top:1627.82px;font-family:'Liberation Sans';font-size:21.74px;line-height:21.74px;font-weight:700;font-style:normal;color:#1a78be;white-space:pre;transform:scaleX(0.9509);transform-origin:0 0;">16</div>
<div style="position:absolute;left:1877.5px;top:1633.98px;-webkit-text-stroke:0.3px currentColor;font-family:'Liberation Sans';font-size:14.49px;line-height:14.49px;font-weight:400;font-style:normal;color:#9a9a9a;white-space:pre;transform:scaleX(1.0783);transform-origin:0 0;">sixteen</div>
<div style="position:absolute;left:2795.3px;top:537.9px;width:724.7px;height:2px;background:#cfcfc8;"></div>
<div style="position:absolute;left:2795.3px;top:551.43px;font-family:'Liberation Sans';font-size:26.09px;line-height:26.09px;font-weight:400;font-style:normal;color:#1a78be;white-space:pre;transform:scaleX(0.9163);transform-origin:0 0;">2</div>
<div style="position:absolute;left:2819.2px;top:556.85px;-webkit-text-stroke:0.3px currentColor;font-family:'Liberation Sans';font-size:19.71px;line-height:19.71px;font-weight:400;font-style:normal;color:#8a8a80;white-space:pre;transform:scaleX(0.9735);transform-origin:0 0;font-variant:small-caps;">Reading</div>
<div style="position:absolute;left:2901.6px;top:555.37px;font-family:'Liberation Sans';font-size:21.45px;line-height:21.45px;font-weight:700;font-style:normal;color:#1a78be;white-space:pre;transform:scaleX(0.8730);transform-origin:0 0;">On the underground</div>
<div style="position:absolute;left:2795.3px;top:593.48px;-webkit-text-stroke:0.3px currentColor;font-family:'Liberation Sans';font-size:18.26px;line-height:18.26px;font-weight:400;font-style:normal;color:#2b8bd0;white-space:pre;transform:scaleX(0.8624);transform-origin:0 0;">a)</div>
<div style="position:absolute;left:2819.2px;top:593.48px;-webkit-text-stroke:0.3px currentColor;font-family:'Liberation Sans';font-size:18.26px;line-height:18.26px;font-weight:400;font-style:normal;color:#8a8a80;white-space:pre;transform:scaleX(0.9432);transform-origin:0 0;font-variant:small-caps;">Before you read</div>
<div style="position:absolute;left:2949.7px;top:593.48px;font-family:'Liberation Sans';font-size:18.26px;line-height:18.26px;font-weight:700;font-style:normal;color:#3a3a3a;white-space:pre;transform:scaleX(0.8633);transform-origin:0 0;">Look at the signs from the underground. Talk about what they mean</div>
<div style="position:absolute;left:2819.2px;top:617.08px;font-family:'Liberation Sans';font-size:18.26px;line-height:18.26px;font-weight:700;font-style:normal;color:#3a3a3a;white-space:pre;transform:scaleX(0.8651);transform-origin:0 0;">and where you could see them (on the train, in the station, on the platform).</div>
<div style="position:absolute;left:2795.3px;top:830.28px;-webkit-text-stroke:0.3px currentColor;font-family:'Liberation Sans';font-size:18.26px;line-height:18.26px;font-weight:400;font-style:normal;color:#2b8bd0;white-space:pre;transform:scaleX(0.8624);transform-origin:0 0;">b)</div>
<div style="position:absolute;left:2819.2px;top:830.28px;font-family:'Liberation Sans';font-size:18.26px;line-height:18.26px;font-weight:700;font-style:normal;color:#3a3a3a;white-space:pre;transform:scaleX(0.8599);transform-origin:0 0;">Read the text. Match the signs (A–E) from <span style="color:#2b8bd0">a)</span> to the sentences (1–5).</div>
<div style="position:absolute;left:2819.2px;top:865.78px;-webkit-text-stroke:0.3px currentColor;font-family:'Liberation Sans';font-size:18.26px;line-height:18.26px;font-weight:400;font-style:normal;color:#4c4c4c;white-space:pre;transform:scaleX(0.9217);transform-origin:0 0;">Lily follows Ali and Pearl down to the platform. The train arrives.</div>
<div style="position:absolute;left:2819.2px;top:889.28px;-webkit-text-stroke:0.3px currentColor;font-family:'Liberation Sans';font-size:18.26px;line-height:18.26px;font-weight:400;font-style:normal;color:#4c4c4c;white-space:pre;transform:scaleX(0.9082);transform-origin:0 0;">‘Be careful when you get on the train,’ says Ali. <span style="color:#3a9ad9">(1 ...)</span> On the train, Ali is annoyed about some of</div>
<div style="position:absolute;left:2819.2px;top:912.98px;-webkit-text-stroke:0.3px currentColor;font-family:'Liberation Sans';font-size:18.26px;line-height:18.26px;font-weight:400;font-style:normal;color:#4c4c4c;white-space:pre;transform:scaleX(0.9075);transform-origin:0 0;">the people. ‘That guy is using two places: One for his dirty shoes! <span style="color:#3a9ad9">(2 ...)</span> And that seat is for</div>
<div style="position:absolute;left:2819.2px;top:936.58px;-webkit-text-stroke:0.3px currentColor;font-family:'Liberation Sans';font-size:18.26px;line-height:18.26px;font-weight:400;font-style:normal;color:#4c4c4c;white-space:pre;transform:scaleX(0.9044);transform-origin:0 0;">people helping someone in a wheelchair.’ <span style="color:#3a9ad9">(3 ...)</span></div>
<div style="position:absolute;left:2819.2px;top:960.28px;-webkit-text-stroke:0.3px currentColor;font-family:'Liberation Sans';font-size:18.26px;line-height:18.26px;font-weight:400;font-style:normal;color:#4c4c4c;white-space:pre;transform:scaleX(0.9022);transform-origin:0 0;">‘We can stand here,’ says Pearl. ‘No, not there: Let those tourists put their big bags there.’ <span style="color:#3a9ad9">(4 ...)</span></div>
<div style="position:absolute;left:2819.2px;top:983.78px;-webkit-text-stroke:0.3px currentColor;font-family:'Liberation Sans';font-size:18.26px;line-height:18.26px;font-weight:400;font-style:normal;color:#4c4c4c;white-space:pre;transform:scaleX(0.9221);transform-origin:0 0;">When the train stops, the friends look around, then go to the right. <span style="color:#3a9ad9">(5 ...)</span></div>
<div style="position:absolute;left:2795.3px;top:1022.6px;width:724.7px;height:2px;background:#cfcfc8;"></div>
<svg style="left:2768.5px;top:1043.6px;" width="18" height="17" viewBox="0 0 18 17"><rect x="1" y="1" width="16" height="15" fill="#f6f6f2" stroke="#9a9a90" stroke-width="2"/><path d="M4 4 H10 L4 10 Z" fill="#8a8a80"/><path d="M6 6 L13 13" stroke="#8a8a80" stroke-width="2"/></svg>
<div style="position:absolute;left:2795.7px;top:1036.53px;font-family:'Liberation Sans';font-size:26.09px;line-height:26.09px;font-weight:400;font-style:normal;color:#1a78be;white-space:pre;transform:scaleX(0.8336);transform-origin:0 0;">3</div>
<div style="position:absolute;left:2820px;top:1041.95px;-webkit-text-stroke:0.3px currentColor;font-family:'Liberation Sans';font-size:19.71px;line-height:19.71px;font-weight:400;font-style:normal;color:#8a8a80;white-space:pre;transform:scaleX(1.0543);transform-origin:0 0;font-variant:small-caps;">Words</div>
<div style="position:absolute;left:2890px;top:1041.08px;font-family:'Liberation Sans';font-size:20.72px;line-height:20.72px;font-weight:700;font-style:normal;color:#1a78be;white-space:pre;transform:scaleX(0.8832);transform-origin:0 0;">Transport</div>
<div style="position:absolute;left:2795.3px;top:1078.88px;-webkit-text-stroke:0.3px currentColor;font-family:'Liberation Sans';font-size:18.26px;line-height:18.26px;font-weight:400;font-style:normal;color:#2b8bd0;white-space:pre;transform:scaleX(0.8624);transform-origin:0 0;">a)</div>
<div style="position:absolute;left:2819px;top:1078.88px;font-family:'Liberation Sans';font-size:18.26px;line-height:18.26px;font-weight:700;font-style:normal;color:#3a3a3a;white-space:pre;transform:scaleX(0.8696);transform-origin:0 0;">Match the words (1–8) to the correct pictures (A–H). Then add them to your <span style="color:#8a8a80;font-weight:400;font-variant:small-caps">Vocab file</span>.</div>
<div style="position:absolute;left:2819px;top:1114.58px;-webkit-text-stroke:0.3px currentColor;font-family:'Liberation Sans';font-size:18.26px;line-height:18.26px;font-weight:400;font-style:normal;color:#8a8a8a;white-space:pre;transform:scaleX(0.7877);transform-origin:0 0;">1</div>
<div style="position:absolute;left:2843.3px;top:1114.58px;-webkit-text-stroke:0.3px currentColor;font-family:'Liberation Sans';font-size:18.26px;line-height:18.26px;font-weight:400;font-style:normal;color:#4c4c4c;white-space:pre;transform:scaleX(1.1068);transform-origin:0 0;">lift</div>
<div style="position:absolute;left:2819px;top:1137.88px;-webkit-text-stroke:0.3px currentColor;font-family:'Liberation Sans';font-size:18.26px;line-height:18.26px;font-weight:400;font-style:normal;color:#8a8a8a;white-space:pre;transform:scaleX(0.7877);transform-origin:0 0;">2</div>
<div style="position:absolute;left:2843.3px;top:1137.88px;-webkit-text-stroke:0.3px currentColor;font-family:'Liberation Sans';font-size:18.26px;line-height:18.26px;font-weight:400;font-style:normal;color:#4c4c4c;white-space:pre;transform:scaleX(0.9274);transform-origin:0 0;">direct</div>
<div style="position:absolute;left:2819px;top:1162.08px;-webkit-text-stroke:0.3px currentColor;font-family:'Liberation Sans';font-size:18.26px;line-height:18.26px;font-weight:400;font-style:normal;color:#8a8a8a;white-space:pre;transform:scaleX(0.7877);transform-origin:0 0;">3</div>
<div style="position:absolute;left:2843.3px;top:1162.08px;-webkit-text-stroke:0.3px currentColor;font-family:'Liberation Sans';font-size:18.26px;line-height:18.26px;font-weight:400;font-style:normal;color:#4c4c4c;white-space:pre;transform:scaleX(0.9362);transform-origin:0 0;">stop</div>
<div style="position:absolute;left:2819px;top:1185.78px;-webkit-text-stroke:0.3px currentColor;font-family:'Liberation Sans';font-size:18.26px;line-height:18.26px;font-weight:400;font-style:normal;color:#8a8a8a;white-space:pre;transform:scaleX(0.7877);transform-origin:0 0;">4</div>
<div style="position:absolute;left:2843.3px;top:1185.78px;-webkit-text-stroke:0.3px currentColor;font-family:'Liberation Sans';font-size:18.26px;line-height:18.26px;font-weight:400;font-style:normal;color:#4c4c4c;white-space:pre;transform:scaleX(0.9011);transform-origin:0 0;">(to) change</div>
<div style="position:absolute;left:2819px;top:1209.08px;-webkit-text-stroke:0.3px currentColor;font-family:'Liberation Sans';font-size:18.26px;line-height:18.26px;font-weight:400;font-style:normal;color:#8a8a8a;white-space:pre;transform:scaleX(0.7877);transform-origin:0 0;">5</div>
<div style="position:absolute;left:2843.3px;top:1209.08px;-webkit-text-stroke:0.3px currentColor;font-family:'Liberation Sans';font-size:18.26px;line-height:18.26px;font-weight:400;font-style:normal;color:#4c4c4c;white-space:pre;transform:scaleX(0.8992);transform-origin:0 0;">escalator</div>
<div style="position:absolute;left:2819px;top:1232.68px;-webkit-text-stroke:0.3px currentColor;font-family:'Liberation Sans';font-size:18.26px;line-height:18.26px;font-weight:400;font-style:normal;color:#8a8a8a;white-space:pre;transform:scaleX(0.7877);transform-origin:0 0;">6</div>
<div style="position:absolute;left:2843.3px;top:1232.68px;-webkit-text-stroke:0.3px currentColor;font-family:'Liberation Sans';font-size:18.26px;line-height:18.26px;font-weight:400;font-style:normal;color:#4c4c4c;white-space:pre;transform:scaleX(0.8734);transform-origin:0 0;">Travelcard</div>
<div style="position:absolute;left:2819px;top:1256.58px;-webkit-text-stroke:0.3px currentColor;font-family:'Liberation Sans';font-size:18.26px;line-height:18.26px;font-weight:400;font-style:normal;color:#8a8a8a;white-space:pre;transform:scaleX(0.7877);transform-origin:0 0;">7</div>
<div style="position:absolute;left:2843.3px;top:1256.58px;-webkit-text-stroke:0.3px currentColor;font-family:'Liberation Sans';font-size:18.26px;line-height:18.26px;font-weight:400;font-style:normal;color:#4c4c4c;white-space:pre;transform:scaleX(0.9865);transform-origin:0 0;">traffic</div>
<div style="position:absolute;left:2819px;top:1280.28px;-webkit-text-stroke:0.3px currentColor;font-family:'Liberation Sans';font-size:18.26px;line-height:18.26px;font-weight:400;font-style:normal;color:#8a8a8a;white-space:pre;transform:scaleX(0.7877);transform-origin:0 0;">8</div>
<div style="position:absolute;left:2843.3px;top:1280.28px;-webkit-text-stroke:0.3px currentColor;font-family:'Liberation Sans';font-size:18.26px;line-height:18.26px;font-weight:400;font-style:normal;color:#4c4c4c;white-space:pre;transform:scaleX(0.9873);transform-origin:0 0;">platform</div>
<div style="position:absolute;left:2794.8px;top:1315.28px;-webkit-text-stroke:0.3px currentColor;font-family:'Liberation Sans';font-size:18.26px;line-height:18.26px;font-weight:400;font-style:normal;color:#2b8bd0;white-space:pre;transform:scaleX(0.8624);transform-origin:0 0;">b)</div>
<div style="position:absolute;left:2819.4px;top:1315.28px;font-family:'Liberation Sans';font-size:18.26px;line-height:18.26px;font-weight:700;font-style:normal;color:#3a3a3a;white-space:pre;transform:scaleX(0.8632);transform-origin:0 0;">Complete the conversation with words from <span style="color:#2b8bd0">a)</span>.</div>
<div style="position:absolute;left:2819.4px;top:1350.08px;font-family:'Liberation Sans';font-size:18.26px;line-height:18.26px;font-weight:700;font-style:normal;color:#3a3a3a;white-space:pre;transform:scaleX(0.8573);transform-origin:0 0;">Ali</div>
<div style="position:absolute;left:2881.7px;top:1350.08px;-webkit-text-stroke:0.3px currentColor;font-family:'Liberation Sans';font-size:18.26px;line-height:18.26px;font-weight:400;font-style:normal;color:#4c4c4c;white-space:pre;transform:scaleX(0.8884);transform-origin:0 0;">It will be our <span style="color:#3a9ad9">... (1)</span> soon. OK, let’s get off.</div>
<div style="position:absolute;left:2819.4px;top:1374.48px;font-family:'Liberation Sans';font-size:18.26px;line-height:18.26px;font-weight:700;font-style:normal;color:#3a3a3a;white-space:pre;transform:scaleX(0.7948);transform-origin:0 0;">Lily</div>
<div style="position:absolute;left:2881.7px;top:1374.48px;-webkit-text-stroke:0.3px currentColor;font-family:'Liberation Sans';font-size:18.26px;line-height:18.26px;font-weight:400;font-style:normal;color:#4c4c4c;white-space:pre;transform:scaleX(0.9157);transform-origin:0 0;">That was really fast!</div>
<div style="position:absolute;left:2819.4px;top:1398.18px;font-family:'Liberation Sans';font-size:18.26px;line-height:18.26px;font-weight:700;font-style:normal;color:#3a3a3a;white-space:pre;transform:scaleX(0.8286);transform-origin:0 0;">Pearl</div>
<div style="position:absolute;left:2881.7px;top:1398.18px;-webkit-text-stroke:0.3px currentColor;font-family:'Liberation Sans';font-size:18.26px;line-height:18.26px;font-weight:400;font-style:normal;color:#4c4c4c;white-space:pre;transform:scaleX(0.9113);transform-origin:0 0;">It is when the train is <span style="color:#3a9ad9">... (2)</span>. But not when you <span style="color:#3a9ad9">... (3)</span> to a different line. You often walk a</div>
<div style="position:absolute;left:2881.7px;top:1421.88px;-webkit-text-stroke:0.3px currentColor;font-family:'Liberation Sans';font-size:18.26px;line-height:18.26px;font-weight:400;font-style:normal;color:#4c4c4c;white-space:pre;transform:scaleX(0.9300);transform-origin:0 0;">long time to the <span style="color:#3a9ad9">... (4)</span> for your next train!</div>
<div style="position:absolute;left:2819.4px;top:1445.58px;font-family:'Liberation Sans';font-size:18.26px;line-height:18.26px;font-weight:700;font-style:normal;color:#3a3a3a;white-space:pre;transform:scaleX(0.8573);transform-origin:0 0;">Ali</div>
<div style="position:absolute;left:2881.7px;top:1445.58px;-webkit-text-stroke:0.3px currentColor;font-family:'Liberation Sans';font-size:18.26px;line-height:18.26px;font-weight:400;font-style:normal;color:#4c4c4c;white-space:pre;transform:scaleX(0.8855);transform-origin:0 0;">OK, let’s go up the <span style="color:#3a9ad9">... (5)</span>. There isn’t a <span style="color:#3a9ad9">... (6)</span> at this station.</div>
<div style="position:absolute;left:2819.4px;top:1469.28px;font-family:'Liberation Sans';font-size:18.26px;line-height:18.26px;font-weight:700;font-style:normal;color:#3a3a3a;white-space:pre;transform:scaleX(0.8286);transform-origin:0 0;">Pearl</div>
<div style="position:absolute;left:2881.7px;top:1469.28px;-webkit-text-stroke:0.3px currentColor;font-family:'Liberation Sans';font-size:18.26px;line-height:18.26px;font-weight:400;font-style:normal;color:#4c4c4c;white-space:pre;transform:scaleX(0.9079);transform-origin:0 0;">Did you bring your <span style="color:#3a9ad9">... (7)</span>, Lily? Remember that you’ll need it when we go out.</div>
<div style="position:absolute;left:2819.4px;top:1492.98px;font-family:'Liberation Sans';font-size:18.26px;line-height:18.26px;font-weight:700;font-style:normal;color:#3a3a3a;white-space:pre;transform:scaleX(0.7948);transform-origin:0 0;">Lily</div>
<div style="position:absolute;left:2881.7px;top:1492.98px;-webkit-text-stroke:0.3px currentColor;font-family:'Liberation Sans';font-size:18.26px;line-height:18.26px;font-weight:400;font-style:normal;color:#4c4c4c;white-space:pre;transform:scaleX(0.8971);transform-origin:0 0;">Yes, I brought  it ... Wow, it’s busy here! Look at all those taxis and buses!</div>
<div style="position:absolute;left:2819.4px;top:1516.68px;font-family:'Liberation Sans';font-size:18.26px;line-height:18.26px;font-weight:700;font-style:normal;color:#3a3a3a;white-space:pre;transform:scaleX(0.8573);transform-origin:0 0;">Ali</div>
<div style="position:absolute;left:2881.7px;top:1516.68px;-webkit-text-stroke:0.3px currentColor;font-family:'Liberation Sans';font-size:18.26px;line-height:18.26px;font-weight:400;font-style:normal;color:#4c4c4c;white-space:pre;transform:scaleX(0.8700);transform-origin:0 0;">Yes, there’s always lots of <span style="color:#3a9ad9">... (8)</span>.</div>
<div style="position:absolute;left:2908px;top:1555.07px;-webkit-text-stroke:0.3px currentColor;font-family:'Liberation Sans';font-size:15.22px;line-height:15.22px;font-weight:400;font-style:normal;color:#8a8a80;white-space:pre;transform:scaleX(0.9198);transform-origin:0 0;"><span style="font-variant:small-caps">Revision</span> The will-future <span style="color:#1a78be">►</span> Language file 5, p.186    <span style="color:#1a78be">►</span> More practice 2, p.43    <span style="color:#1a78be">►</span> Challenge 1, p.44</div>
<div style="position:absolute;left:3406.5px;top:1590.77px;-webkit-text-stroke:0.3px currentColor;font-family:'Liberation Sans';font-size:15.22px;line-height:15.22px;font-weight:400;font-style:normal;color:#8a8a8a;white-space:pre;transform:scaleX(0.8812);transform-origin:0 0;"><span style="color:#1a78be">►</span> Workbook, p.19</div>
<div style="position:absolute;left:3450.8px;top:1633.08px;-webkit-text-stroke:0.3px currentColor;font-family:'Liberation Sans';font-size:14.49px;line-height:14.49px;font-weight:400;font-style:normal;color:#9a9a9a;white-space:pre;transform:scaleX(1.0173);transform-origin:0 0;">seventeen</div>
<div style="position:absolute;left:3544px;top:1627.32px;font-family:'Liberation Sans';font-size:21.74px;line-height:21.74px;font-weight:700;font-style:normal;color:#1a78be;white-space:pre;transform:scaleX(0.9385);transform-origin:0 0;">17</div>
<svg width="0" height="0" style="position:absolute"><defs><filter id="pb" x="-5%" y="-5%" width="110%" height="110%"><feGaussianBlur stdDeviation="0.7"/></filter><filter id="pb2" x="-5%" y="-5%" width="110%" height="110%"><feGaussianBlur stdDeviation="1.6"/></filter></defs></svg>
<svg style="left:2237.3px;top:619.6px;overflow:hidden;" width="365.7" height="190.4" viewBox="0 0 365.7 190.4" preserveAspectRatio="none"><g filter="url(#pb)"><rect width="366" height="191" fill="#c9d0cf"/><rect x="0" y="0" width="366" height="150" fill="#e2e6e3"/><path d="M40 191 Q130 -30 366 20" fill="none" stroke="#5e98a2" stroke-width="2.2"/><path d="M70 191 Q152 -30 366 33" fill="none" stroke="#5e98a2" stroke-width="2.2"/><path d="M100 191 Q174 -30 366 46" fill="none" stroke="#5e98a2" stroke-width="2.2"/><path d="M130 191 Q196 -30 366 59" fill="none" stroke="#5e98a2" stroke-width="2.2"/><path d="M160 191 Q218 -30 366 72" fill="none" stroke="#5e98a2" stroke-width="2.2"/><path d="M190 191 Q240 -30 366 85" fill="none" stroke="#5e98a2" stroke-width="2.2"/><path d="M220 191 Q262 -30 366 98" fill="none" stroke="#5e98a2" stroke-width="2.2"/><path d="M250 191 Q284 -30 366 111" fill="none" stroke="#5e98a2" stroke-width="2.2"/><path d="M280 191 Q306 -30 366 124" fill="none" stroke="#5e98a2" stroke-width="2.2"/><path d="M70 0 L150 125" stroke="#6aa0a8" stroke-width="1.6"/><path d="M112 0 L184 125" stroke="#6aa0a8" stroke-width="1.6"/><path d="M154 0 L218 125" stroke="#6aa0a8" stroke-width="1.6"/><path d="M196 0 L252 125" stroke="#6aa0a8" stroke-width="1.6"/><path d="M238 0 L286 125" stroke="#6aa0a8" stroke-width="1.6"/><path d="M280 0 L320 125" stroke="#6aa0a8" stroke-width="1.6"/><path d="M322 0 L354 125" stroke="#6aa0a8" stroke-width="1.6"/><path d="M0 0 H70 V191 H0 Z" fill="#b8b08a"/><path d="M8 0 V191 M30 0 V191 M55 0 V191" stroke="#7d9a8a" stroke-width="4"/><rect x="70" y="0" width="12" height="191" fill="#3e7a72"/><rect x="250" y="80" width="116" height="72" fill="#cfae72"/><path d="M258 152 V112 Q271 88 284 112 V152 Z" fill="#e8e4d4"/><path d="M285 152 V112 Q298 88 311 112 V152 Z" fill="#e8e4d4"/><path d="M312 152 V112 Q325 88 338 112 V152 Z" fill="#e8e4d4"/><path d="M339 152 V112 Q352 88 365 112 V152 Z" fill="#e8e4d4"/><rect x="205" y="145" width="161" height="46" fill="#a6a8a6"/><rect x="208" y="150" width="6" height="32" fill="#2e2e34"/><rect x="221" y="155" width="6" height="32" fill="#2e2e34"/><rect x="234" y="160" width="6" height="32" fill="#2e2e34"/><rect x="247" y="150" width="6" height="32" fill="#2e2e34"/><rect x="260" y="155" width="6" height="32" fill="#2e2e34"/><rect x="273" y="160" width="6" height="32" fill="#2e2e34"/><rect x="286" y="150" width="6" height="32" fill="#2e2e34"/><rect x="299" y="155" width="6" height="32" fill="#2e2e34"/><rect x="312" y="160" width="6" height="32" fill="#2e2e34"/><rect x="325" y="150" width="6" height="32" fill="#2e2e34"/><rect x="338" y="155" width="6" height="32" fill="#2e2e34"/><rect x="351" y="160" width="6" height="32" fill="#2e2e34"/><rect x="240" y="152" width="8" height="12" fill="#d84a2a"/><rect x="330" y="150" width="8" height="12" fill="#d84a2a"/><rect x="0" y="178" width="366" height="13" fill="#b0b2b0"/><rect x="255" y="128" width="14" height="22" fill="#2a3a86"/><path d="M30 98 Q4 76 28 52 L64 22" fill="none" stroke="#d09880" stroke-width="15" stroke-linecap="round"/><ellipse cx="68" cy="19" rx="10" ry="13" fill="#d8a088"/><rect x="47" y="32" width="8" height="7" fill="#222"/><ellipse cx="61" cy="64" rx="23" ry="24" fill="#3e2418"/><ellipse cx="71" cy="69" rx="12" ry="17" fill="#d8a488"/><path d="M22 102 Q36 86 60 88 Q100 90 112 105 L118 191 H30 Z" fill="#1f62b4"/><path d="M136 191 L137 120 Q141 76 168 76 Q198 76 202 120 L206 191 Z" fill="#2a1a14"/><ellipse cx="169" cy="106" rx="14" ry="24" fill="#5a3424"/><path d="M118 191 Q118 142 140 133 L210 131 Q222 140 222 191 Z" fill="#f2f2f2"/><path d="M147 140 Q165 175 158 191 L196 191 Q190 160 199 136 Z" fill="#3a2418"/><path d="M206 146 L234 122" stroke="#7a4a38" stroke-width="12" stroke-linecap="round"/><ellipse cx="236" cy="106" rx="9" ry="14" fill="#7a4a38"/></g></svg>
<svg style="left:1900.6px;top:780.6px;overflow:hidden;" width="223.6" height="238.1" viewBox="0 0 223.6 238.1" preserveAspectRatio="none"><g filter="url(#pb)"><rect width="224" height="239" fill="#4a3a2c"/><rect x="0" y="20" width="40" height="120" fill="#5a4628"/><rect x="100" y="40" width="70" height="90" fill="#6a5634"/><rect x="4" y="40" width="12" height="10" fill="#e04030"/><rect x="8" y="60" width="14" height="12" fill="#30a080"/><rect x="2" y="85" width="16" height="12" fill="#e0c040"/><path d="M35 10 L75 0 L80 80 L40 85 Z" fill="#d050b0"/><path d="M45 30 L75 25 L78 60 L50 65 Z" fill="#9050d0"/><rect x="38" y="45" width="15" height="15" fill="#30b070"/><rect x="80" y="5" width="30" height="35" fill="#e04436"/><rect x="115" y="0" width="40" height="40" fill="#b8aea4"/><rect x="160" y="0" width="64" height="14" fill="#6a3a50"/><rect x="62" y="40" width="35" height="55" fill="#2c4a6c"/><rect x="66" y="34" width="22" height="16" fill="#d8d0c8"/><path d="M90 0 Q115 20 95 90 M20 130 Q30 60 60 30" fill="none" stroke="#c49a3a" stroke-width="5"/><rect x="110" y="60" width="40" height="10" fill="#d8c8b0"/><rect x="115" y="90" width="35" height="12" fill="#2a2420"/><ellipse cx="185" cy="70" rx="46" ry="64" fill="#2c2e38"/><path d="M192 90 Q205 80 224 85 V130 Q205 135 195 120 Z" fill="#ecccc0"/><path d="M165 125 L185 118 L190 239 L160 239 Z" fill="#3a84d0"/><path d="M180 125 Q200 120 224 125 V239 H180 Z" fill="#e0e8f2"/><rect x="176" y="172" width="48" height="67" fill="#f2f4f8"/><text x="180" y="205" font-family="Liberation Sans" font-size="26" fill="#2a3a6a" font-weight="700">50%</text><rect x="185" y="215" width="35" height="5" fill="#6a7aa0"/><rect x="188" y="226" width="30" height="5" fill="#6a7aa0"/><path d="M110 130 L160 125 L165 239 L105 239 Z" fill="#d8962e"/><path d="M118 135 L132 133 L140 239 H122 Z" fill="#eee0c8"/><rect x="142" y="170" width="12" height="69" fill="#c04030"/><path d="M88 115 L102 112 L106 200 L92 200 Z" fill="#3290e0"/><path d="M8 92 Q50 80 92 88 L95 140 Q60 130 40 135 L15 115 Z" fill="#dcb890"/><ellipse cx="55" cy="110" rx="16" ry="10" fill="#7898cc"/><path d="M30 125 Q55 115 75 128 L72 168 Q55 178 35 165 Z" fill="#e8c4b4"/><rect x="45" y="150" width="16" height="4" fill="#c86a6a"/><rect x="0" y="140" width="22" height="60" fill="#e8e8e6"/><rect x="0" y="200" width="14" height="39" fill="#c84030"/><path d="M20 239 L28 185 Q60 165 95 175 L125 190 L130 239 Z" fill="#d8aa88"/><rect x="2" y="2" width="21" height="21" fill="#ebe5d6"/><text x="12.5" y="17.119999999999997" font-family="Liberation Sans" font-size="11.55" fill="#8a8478" text-anchor="middle">A</text></g></svg>
<svg style="left:2141.5px;top:828px;overflow:hidden;" width="221.4" height="190.7" viewBox="0 0 221.4 190.7" preserveAspectRatio="none"><g filter="url(#pb)"><rect width="222" height="191" fill="#5a4a48"/><rect x="0" y="10" width="60" height="60" fill="#e0b264"/><rect x="30" y="40" width="25" height="22" fill="#6a3020"/><ellipse cx="65" cy="50" rx="18" ry="16" fill="#e6e0e0"/><rect x="58" y="0" width="60" height="50" fill="#343c52"/><rect x="118" y="0" width="10" height="30" fill="#d07030"/><rect x="145" y="0" width="77" height="85" fill="#1c2042"/><rect x="212" y="10" width="10" height="35" fill="#e08030"/><rect x="0" y="58" width="78" height="40" fill="#d83a8e"/><rect x="0" y="78" width="56" height="105" fill="#2a2e38"/><path d="M6 95 H46 M6 115 H48 M6 135 H46 M8 158 H44" stroke="#4cc4c6" stroke-width="5"/><path d="M90 28 L150 22 L152 50 L92 58 Z" fill="#2a6452"/><rect x="72" y="52" width="100" height="50" fill="#e6c88e"/><circle cx="80" cy="58" r="4" fill="#d83040"/><circle cx="91" cy="64" r="4" fill="#3a2a4a"/><circle cx="102" cy="70" r="4" fill="#d03a3a"/><circle cx="113" cy="58" r="4" fill="#d83040"/><circle cx="124" cy="64" r="4" fill="#3a2a4a"/><circle cx="135" cy="70" r="4" fill="#d03a3a"/><circle cx="146" cy="58" r="4" fill="#d83040"/><circle cx="157" cy="64" r="4" fill="#3a2a4a"/><circle cx="168" cy="70" r="4" fill="#d03a3a"/><ellipse cx="205" cy="85" rx="28" ry="32" fill="#e0a24e"/><ellipse cx="205" cy="70" rx="22" ry="14" fill="#eee0c0"/><rect x="65" y="98" width="82" height="48" fill="#3c4452"/><path d="M168 100 L222 110 V158 L160 150 Z" fill="#f0e67e"/><ellipse cx="80" cy="158" rx="26" ry="22" fill="#e8c4d4"/><path d="M95 135 L222 130 V191 H100 Z" fill="#f0e0e8"/><circle cx="110" cy="148" r="4.5" fill="#2a2040"/><circle cx="124" cy="158" r="4.5" fill="#d03040"/><circle cx="138" cy="148" r="4.5" fill="#2a2040"/><circle cx="152" cy="158" r="4.5" fill="#d03040"/><circle cx="166" cy="148" r="4.5" fill="#2a2040"/><circle cx="180" cy="158" r="4.5" fill="#d03040"/><circle cx="194" cy="148" r="4.5" fill="#2a2040"/><circle cx="208" cy="158" r="4.5" fill="#d03040"/><rect x="0" y="183" width="100" height="8" fill="#2aa0a2"/><rect x="0" y="0" width="21" height="21" fill="#ebe5d6"/><text x="10.5" y="15.12" font-family="Liberation Sans" font-size="11.55" fill="#8a8478" text-anchor="middle">B</text></g></svg>
<svg style="left:2379.7px;top:828px;overflow:hidden;" width="223.6" height="190.7" viewBox="0 0 223.6 190.7" preserveAspectRatio="none"><g filter="url(#pb)"><rect width="224" height="191" fill="#2274c8"/><rect x="10" y="0" width="2" height="152" fill="#1a60b0"/><rect x="34" y="0" width="2" height="152" fill="#1a60b0"/><rect x="58" y="0" width="2" height="152" fill="#1a60b0"/><rect x="82" y="0" width="2" height="152" fill="#1a60b0"/><rect x="106" y="0" width="2" height="152" fill="#1a60b0"/><rect x="130" y="0" width="2" height="152" fill="#1a60b0"/><rect x="154" y="0" width="2" height="152" fill="#1a60b0"/><rect x="178" y="0" width="2" height="152" fill="#1a60b0"/><rect x="202" y="0" width="2" height="152" fill="#1a60b0"/><rect x="0" y="150" width="224" height="41" fill="#56565a"/><rect x="60" y="160" width="100" height="31" fill="#6a6a6c"/><path d="M11 92 Q40 66 80 66 L112 70 Q120 90 118 112 L20 114 Z" fill="#c0a44a"/><path d="M30 80 L50 72 L60 90 Z M95 75 L110 80 L105 95 Z" fill="#7a8a50"/><rect x="72" y="70" width="20" height="12" fill="#ececf0"/><ellipse cx="81" cy="57" rx="12" ry="17" fill="#9a6048"/><ellipse cx="78" cy="36" rx="14" ry="9" fill="#dcb676"/><ellipse cx="60" cy="116" rx="44" ry="31" fill="#ead0a0"/><circle cx="79" cy="112" r="8" fill="#3a2a20"/><path d="M96 99 L180 84" stroke="#6a5a4a" stroke-width="7"/><rect x="172" y="76" width="25" height="14" fill="#c44424" transform="rotate(-10 184 83)"/><path d="M14 90 Q28 112 70 110" fill="none" stroke="#a86a50" stroke-width="9" stroke-linecap="round"/><path d="M50 168 Q60 122 110 112 L150 104 Q172 104 176 120 L182 150 L160 152 L150 126 Q130 140 125 176 L60 178 Z" fill="#cad4e4"/><path d="M114 152 L150 150 L152 176 L118 178 Z" fill="#161616"/><path d="M153 150 L190 160 Q212 165 216 180 L214 191 H160 Z" fill="#161616"/><path d="M35 152 L50 150 L52 166 L34 168 Z" fill="#c89880"/><rect x="0" y="0" width="21" height="21" fill="#ebe5d6"/><text x="10.5" y="15.12" font-family="Liberation Sans" font-size="11.55" fill="#8a8478" text-anchor="middle">C</text></g></svg>
<svg style="left:2395.5px;top:1259.8px;overflow:hidden;" width="194.5" height="119.2" viewBox="0 0 194.5 119.2" preserveAspectRatio="none"><g filter="url(#pb2)"><rect x="-5" y="-5" width="205" height="130" fill="#c8c8d0"/><rect x="-5" y="-5" width="55" height="100" fill="#c82a22"/><rect x="4" y="2" width="40" height="41" fill="#b8bcc0"/><rect x="8" y="8" width="14" height="30" fill="#3a3434"/><rect x="26" y="6" width="12" height="20" fill="#4a6a8a"/><rect x="63" y="3" width="89" height="40" rx="4" fill="#7a8088"/><rect x="70" y="12" width="30" height="25" fill="#4a5058"/><rect x="105" y="8" width="16" height="12" fill="#d05a30"/><rect x="108" y="14" width="10" height="4" fill="#2a3a70"/><rect x="128" y="10" width="18" height="26" fill="#b89a70"/><rect x="167" y="3" width="30" height="40" fill="#6a7078"/><circle cx="157" cy="58.4" r="10" fill="none" stroke="#d85a3a" stroke-width="4.5"/><rect x="143" y="55" width="28" height="6" fill="#3a5aa0"/><rect x="-5" y="74.6" width="205" height="22" fill="#1e2a5a"/><rect x="-5" y="94" width="55" height="2" fill="#c82a22"/><rect x="-5" y="96.3" width="205" height="7" fill="#0a0a0c"/><rect x="-5" y="103" width="205" height="5" fill="#c0c4cc"/><rect x="-5" y="107.8" width="205" height="8" fill="#4a4a48"/><rect x="45" y="109" width="100" height="5" fill="#a8a040"/><rect x="-5" y="115.7" width="205" height="10" fill="#e8b030"/></g></svg>
<svg style="left:2818.4px;top:649.8px;overflow:hidden;" width="108.4" height="147.2" viewBox="0 0 108.4 147.2" preserveAspectRatio="none"><g filter="url(#pb)"><rect width="109" height="148" fill="#d6d2c6"/><rect x="7" y="9" width="94" height="65" fill="#1d4fae"/><rect x="7" y="77" width="94" height="64" fill="#1d4fae"/><path d="M20 58 L27 35 L36 50 M27 35 L26 24" stroke="#fff" stroke-width="4" fill="none"/><circle cx="27" cy="20" r="4" fill="#fff"/><circle cx="40" cy="48" r="4" fill="#fff"/><path d="M36 56 H46" stroke="#fff" stroke-width="3"/><rect x="53" y="35" width="34" height="30" fill="#fff"/><rect x="58" y="35" width="4" height="30" fill="#1d4fae"/><rect x="78" y="35" width="4" height="30" fill="#1d4fae"/><path d="M14 90 H70 M14 103 H85 M14 116 H72" stroke="#dfe6f4" stroke-width="6"/><path d="M14 130 H92" stroke="#c8d4ec" stroke-width="4"/><rect x="0" y="0" width="20" height="20" fill="#ebe5d6"/><text x="10.0" y="14.399999999999999" font-family="Liberation Sans" font-size="11.0" fill="#8a8478" text-anchor="middle">A</text></g></svg>
<svg style="left:2947.5px;top:670.2px;overflow:hidden;" width="148.1" height="106.2" viewBox="0 0 148.1 106.2" preserveAspectRatio="none"><g filter="url(#pb)"><rect width="149" height="107" fill="#e8e8e4"/><rect x="0" y="0" width="149" height="10" fill="#2f6a58"/><rect x="0" y="10" width="149" height="15" fill="#1f48b8"/><rect x="12" y="37" width="124" height="30" fill="#111"/><text x="36" y="60" font-family="Liberation Sans" font-size="17" font-weight="700" fill="#f0e030">Way out →</text><rect x="0" y="80" width="149" height="27" fill="#3f9a86"/><rect x="68" y="90" width="80" height="14" fill="#e6e6de"/><rect x="0" y="0" width="20" height="20" fill="#ebe5d6"/><text x="10.0" y="14.399999999999999" font-family="Liberation Sans" font-size="11.0" fill="#8a8478" text-anchor="middle">B</text></g></svg>
<svg style="left:3116px;top:649.8px;overflow:hidden;" width="106.2" height="147.2" viewBox="0 0 106.2 147.2" preserveAspectRatio="none"><g filter="url(#pb)"><rect width="107" height="148" fill="#aaa49e"/><path d="M8 28 L100 12 L100 118 L12 135 Z" fill="#1c1f4c"/><text x="16" y="44" font-family="Liberation Sans" font-size="11" fill="#e8e8e8" transform="rotate(-10 16 44)">Please keep</text><text x="16" y="58" font-family="Liberation Sans" font-size="11" fill="#e8e8e8" transform="rotate(-10 16 58)">feet off</text><text x="16" y="72" font-family="Liberation Sans" font-size="11" fill="#e8e8e8" transform="rotate(-10 16 72)">seats</text><circle cx="76" cy="50" r="7" fill="#f0ecd8"/><path d="M75 60 L65 98 L45 103 M65 98 L58 118" stroke="#f0ecd8" stroke-width="8" fill="none"/><path d="M42 85 L46 108 L70 102" stroke="#c04040" stroke-width="2" fill="none"/><rect x="0" y="0" width="20" height="20" fill="#ebe5d6"/><text x="10.0" y="14.399999999999999" font-family="Liberation Sans" font-size="11.0" fill="#8a8478" text-anchor="middle">C</text></g></svg>
<svg style="left:3243.2px;top:670.2px;overflow:hidden;" width="148.7" height="106.2" viewBox="0 0 148.7 106.2" preserveAspectRatio="none"><g filter="url(#pb)"><rect width="149" height="107" fill="#8a8a88"/><rect x="25" y="0" width="124" height="22" fill="#1a1c20"/><rect x="0" y="22" width="149" height="8" fill="#9aa0a8"/><text x="24" y="45" font-family="Liberation Sans" font-size="13" font-weight="700" fill="#e8e8e8">MIND THE GAP</text><rect x="0" y="50" width="149" height="7" fill="#d8c840"/><rect x="0" y="60" width="149" height="40" fill="#9a9a96"/><rect x="4" y="64" width="5" height="32" fill="#7a7a78"/><rect x="14" y="64" width="5" height="32" fill="#7a7a78"/><rect x="24" y="64" width="5" height="32" fill="#7a7a78"/><rect x="34" y="64" width="5" height="32" fill="#7a7a78"/><rect x="44" y="64" width="5" height="32" fill="#7a7a78"/><rect x="54" y="64" width="5" height="32" fill="#7a7a78"/><rect x="64" y="64" width="5" height="32" fill="#7a7a78"/><rect x="74" y="64" width="5" height="32" fill="#7a7a78"/><rect x="84" y="64" width="5" height="32" fill="#7a7a78"/><rect x="94" y="64" width="5" height="32" fill="#7a7a78"/><rect x="104" y="64" width="5" height="32" fill="#7a7a78"/><rect x="114" y="64" width="5" height="32" fill="#7a7a78"/><rect x="124" y="64" width="5" height="32" fill="#7a7a78"/><rect x="134" y="64" width="5" height="32" fill="#7a7a78"/><rect x="144" y="64" width="5" height="32" fill="#7a7a78"/><path d="M62 107 Q65 85 75 80 Q85 85 88 107 Z" fill="#2a2a2a"/><circle cx="65" cy="88" r="5" fill="#b08040"/><circle cx="85" cy="88" r="5" fill="#b08040"/><rect x="0" y="0" width="20" height="20" fill="#ebe5d6"/><text x="10.0" y="14.399999999999999" font-family="Liberation Sans" font-size="11.0" fill="#8a8478" text-anchor="middle">D</text></g></svg>
<svg style="left:3412.3px;top:649.8px;overflow:hidden;" width="109" height="147.2" viewBox="0 0 109 147.2" preserveAspectRatio="none"><g filter="url(#pb)"><rect width="110" height="148" fill="#8a9094"/><path d="M0 0 H110 V40 L20 20 Z" fill="#a6aaa8"/><path d="M4 40 Q40 28 100 38 L106 100 Q60 112 4 108 Z" fill="#1e88d0"/><rect x="22" y="48" width="68" height="45" rx="5" fill="#6a8090"/><circle cx="48" cy="57" r="3" fill="#fff"/><path d="M48 62 V76 L44 85" stroke="#fff" stroke-width="3" fill="none"/><circle cx="62" cy="76" r="6" fill="none" stroke="#cfd8e0" stroke-width="2"/><rect x="0" y="110" width="110" height="38" fill="#2a376c"/><rect x="0" y="115" width="8" height="6" fill="#4a5a9a"/><rect x="14" y="125" width="8" height="6" fill="#4a5a9a"/><rect x="28" y="115" width="8" height="6" fill="#4a5a9a"/><rect x="42" y="125" width="8" height="6" fill="#4a5a9a"/><rect x="56" y="115" width="8" height="6" fill="#4a5a9a"/><rect x="70" y="125" width="8" height="6" fill="#4a5a9a"/><rect x="84" y="115" width="8" height="6" fill="#4a5a9a"/><rect x="98" y="125" width="8" height="6" fill="#4a5a9a"/><rect x="0" y="0" width="20" height="20" fill="#ebe5d6"/><text x="10.0" y="14.399999999999999" font-family="Liberation Sans" font-size="11.0" fill="#8a8478" text-anchor="middle">E</text></g></svg>
<svg style="left:2957.4px;top:1116.3px;overflow:hidden;" width="134" height="83.2" viewBox="0 0 134 83.2" preserveAspectRatio="none"><g filter="url(#pb)"><rect width="134" height="84" fill="#c8c6bc"/><rect x="20" y="0" width="45" height="40" fill="#9ab0c0"/><rect x="55" y="0" width="70" height="12" fill="#5a6470"/><path d="M105 0 H134 V45 L112 38 Z" fill="#2a3038"/><path d="M105 38 L134 42 V84 H100 Z" fill="#3a8ad0"/><path d="M8 78 Q6 52 30 44 L78 2 H92 L48 48 Q34 56 32 78 Z" fill="#e2e4e0" stroke="#3a4a58" stroke-width="2.2"/><path d="M36 80 Q34 56 58 48 L108 2 H122 L78 52 Q62 58 60 80 Z" fill="#d8d0bc" stroke="#3a4a58" stroke-width="2.2"/><path d="M64 44 L104 6" stroke="#8a8a7a" stroke-width="3" stroke-dasharray="2 2"/><rect x="89" y="52" width="15" height="28" rx="5" fill="#a8b4bc" stroke="#4a5a66" stroke-width="1.5"/><rect x="0" y="76" width="134" height="8" fill="#c0b8a8"/><rect x="2" y="2" width="18" height="18" fill="#ebe5d6"/><text x="11.0" y="14.959999999999999" font-family="Liberation Sans" font-size="9.9" fill="#8a8478" text-anchor="middle">A</text><rect x="0.5" y="0.5" width="133" height="82.2" fill="none" stroke="#c9c3a6" stroke-width="1.2"/></g></svg>
<svg style="left:3101.2px;top:1116.3px;overflow:hidden;" width="132.6" height="83.2" viewBox="0 0 132.6 83.2" preserveAspectRatio="none"><g filter="url(#pb)"><rect width="134" height="84" fill="#a6b2bc"/><rect x="0" y="0" width="134" height="26" fill="#e6d2b6"/><path d="M55 0 H125 V10 L110 14 L95 8 L80 12 L65 6 Z" fill="#7ab8e0"/><rect x="-5" y="24" width="13.0" height="8.0" rx="2" fill="#a0b4c8" stroke="#4a5a6a" stroke-width="0.8"/><rect x="13" y="24" width="13.0" height="8.0" rx="2" fill="#b8c8d4" stroke="#4a5a6a" stroke-width="0.8"/><rect x="26" y="24" width="13.0" height="8.0" rx="2" fill="#a0b4c8" stroke="#4a5a6a" stroke-width="0.8"/><rect x="42" y="24" width="13.0" height="8.0" rx="2" fill="#a0b4c8" stroke="#4a5a6a" stroke-width="0.8"/><rect x="54" y="24" width="13.0" height="8.0" rx="2" fill="#a0b4c8" stroke="#4a5a6a" stroke-width="0.8"/><rect x="69" y="24" width="13.0" height="8.0" rx="2" fill="#d0d8e0" stroke="#4a5a6a" stroke-width="0.8"/><rect x="86" y="24" width="13.0" height="8.0" rx="2" fill="#a0b4c8" stroke="#4a5a6a" stroke-width="0.8"/><rect x="100" y="24" width="13.0" height="8.0" rx="2" fill="#b8c8d4" stroke="#4a5a6a" stroke-width="0.8"/><rect x="117" y="24" width="13.0" height="8.0" rx="2" fill="#a0b4c8" stroke="#4a5a6a" stroke-width="0.8"/><rect x="5" y="32" width="14.5" height="9.0" rx="2" fill="#d0d8e0" stroke="#4a5a6a" stroke-width="0.8"/><rect x="19" y="32" width="14.5" height="9.0" rx="2" fill="#b8c8d4" stroke="#4a5a6a" stroke-width="0.8"/><rect x="32" y="32" width="14.5" height="9.0" rx="2" fill="#b8c8d4" stroke="#4a5a6a" stroke-width="0.8"/><rect x="50" y="32" width="14.5" height="9.0" rx="2" fill="#d0d8e0" stroke="#4a5a6a" stroke-width="0.8"/><rect x="61" y="32" width="14.5" height="9.0" rx="2" fill="#9ab0c4" stroke="#4a5a6a" stroke-width="0.8"/><rect x="77" y="32" width="14.5" height="9.0" rx="2" fill="#a0b4c8" stroke="#4a5a6a" stroke-width="0.8"/><rect x="91" y="32" width="14.5" height="9.0" rx="2" fill="#8aa4bc" stroke="#4a5a6a" stroke-width="0.8"/><rect x="106" y="32" width="14.5" height="9.0" rx="2" fill="#8aa4bc" stroke="#4a5a6a" stroke-width="0.8"/><rect x="124" y="32" width="14.5" height="9.0" rx="2" fill="#a0b4c8" stroke="#4a5a6a" stroke-width="0.8"/><rect x="-3" y="40" width="16.0" height="10.0" rx="2" fill="#d0d8e0" stroke="#4a5a6a" stroke-width="0.8"/><rect x="12" y="40" width="16.0" height="10.0" rx="2" fill="#a0b4c8" stroke="#4a5a6a" stroke-width="0.8"/><rect x="27" y="40" width="16.0" height="10.0" rx="2" fill="#b8c8d4" stroke="#4a5a6a" stroke-width="0.8"/><rect x="41" y="40" width="16.0" height="10.0" rx="2" fill="#9ab0c4" stroke="#4a5a6a" stroke-width="0.8"/><rect x="54" y="40" width="16.0" height="10.0" rx="2" fill="#b8c8d4" stroke="#4a5a6a" stroke-width="0.8"/><rect x="72" y="40" width="16.0" height="10.0" rx="2" fill="#b8c8d4" stroke="#4a5a6a" stroke-width="0.8"/><rect x="86" y="40" width="16.0" height="10.0" rx="2" fill="#d0d8e0" stroke="#4a5a6a" stroke-width="0.8"/><rect x="101" y="40" width="16.0" height="10.0" rx="2" fill="#d0d8e0" stroke="#4a5a6a" stroke-width="0.8"/><rect x="118" y="40" width="16.0" height="10.0" rx="2" fill="#d0d8e0" stroke="#4a5a6a" stroke-width="0.8"/><rect x="5" y="48" width="17.5" height="11.0" rx="2" fill="#8aa4bc" stroke="#4a5a6a" stroke-width="0.8"/><rect x="20" y="48" width="17.5" height="11.0" rx="2" fill="#a0b4c8" stroke="#4a5a6a" stroke-width="0.8"/><rect x="34" y="48" width="17.5" height="11.0" rx="2" fill="#a0b4c8" stroke="#4a5a6a" stroke-width="0.8"/><rect x="47" y="48" width="17.5" height="11.0" rx="2" fill="#8aa4bc" stroke="#4a5a6a" stroke-width="0.8"/><rect x="61" y="48" width="17.5" height="11.0" rx="2" fill="#8aa4bc" stroke="#4a5a6a" stroke-width="0.8"/><rect x="80" y="48" width="17.5" height="11.0" rx="2" fill="#b8c8d4" stroke="#4a5a6a" stroke-width="0.8"/><rect x="93" y="48" width="17.5" height="11.0" rx="2" fill="#a0b4c8" stroke="#4a5a6a" stroke-width="0.8"/><rect x="110" y="48" width="17.5" height="11.0" rx="2" fill="#a0b4c8" stroke="#4a5a6a" stroke-width="0.8"/><rect x="121" y="48" width="17.5" height="11.0" rx="2" fill="#b8c8d4" stroke="#4a5a6a" stroke-width="0.8"/><rect x="-2" y="56" width="19.0" height="12.0" rx="2" fill="#8aa4bc" stroke="#4a5a6a" stroke-width="0.8"/><rect x="11" y="56" width="19.0" height="12.0" rx="2" fill="#9ab0c4" stroke="#4a5a6a" stroke-width="0.8"/><rect x="24" y="56" width="19.0" height="12.0" rx="2" fill="#d0d8e0" stroke="#4a5a6a" stroke-width="0.8"/><rect x="42" y="56" width="19.0" height="12.0" rx="2" fill="#9ab0c4" stroke="#4a5a6a" stroke-width="0.8"/><rect x="56" y="56" width="19.0" height="12.0" rx="2" fill="#9ab0c4" stroke="#4a5a6a" stroke-width="0.8"/><rect x="72" y="56" width="19.0" height="12.0" rx="2" fill="#b8c8d4" stroke="#4a5a6a" stroke-width="0.8"/><rect x="84" y="56" width="19.0" height="12.0" rx="2" fill="#8aa4bc" stroke="#4a5a6a" stroke-width="0.8"/><rect x="102" y="56" width="19.0" height="12.0" rx="2" fill="#d0d8e0" stroke="#4a5a6a" stroke-width="0.8"/><rect x="114" y="56" width="19.0" height="12.0" rx="2" fill="#9ab0c4" stroke="#4a5a6a" stroke-width="0.8"/><path d="M22 50 Q24 38 32 38 H48 Q54 40 54 50 V58 H22 Z" fill="#c84a40" stroke="#4a2a2a" stroke-width="1"/><path d="M0 58 Q2 50 12 50 H38 Q46 52 46 62 V84 H0 Z" fill="#7e9cba" stroke="#3a4a5a" stroke-width="1.2"/><rect x="4" y="52" width="30" height="8" fill="#3a6a70"/><rect x="5" y="72" width="14" height="2.5" fill="#e0d040"/><path d="M60 84 Q62 66 76 64 H104 Q114 66 116 84 Z" fill="#d83a3a" stroke="#4a2020" stroke-width="1.2"/><rect x="70" y="68" width="36" height="10" fill="#2a5a60"/><path d="M112 45 H134 V75 H114 Z" fill="#8aa4bc" stroke="#3a4a5a" stroke-width="1"/><rect x="2" y="2" width="18" height="18" fill="#ebe5d6"/><text x="11.0" y="14.959999999999999" font-family="Liberation Sans" font-size="9.9" fill="#8a8478" text-anchor="middle">B</text><rect x="0.5" y="0.5" width="131.6" height="82.2" fill="none" stroke="#c9c3a6" stroke-width="1.2"/></g></svg>
<svg style="left:3243.5px;top:1116.3px;overflow:hidden;" width="133.4" height="83.2" viewBox="0 0 133.4 83.2" preserveAspectRatio="none"><g filter="url(#pb)"><rect width="134" height="84" fill="#f4ee9e"/><text transform="translate(1.8 53) scale(0.62 1)" font-family="Liberation Sans" font-size="36.2" fill="#1a5a40">A</text><path d="M19 41 H107" stroke="#7e1a5e" stroke-width="6.2"/><path d="M105 34.5 L117 41 L105 47.5 Z" fill="#7e1a5e"/><text transform="translate(120.5 52) scale(0.62 1)" font-family="Liberation Sans" font-size="34.1" fill="#1a5a40">B</text><rect x="2" y="2" width="18" height="18" fill="#ebe5d6"/><text x="11.0" y="14.959999999999999" font-family="Liberation Sans" font-size="9.9" fill="#8a8478" text-anchor="middle">C</text><rect x="0.5" y="0.5" width="132.4" height="82.2" fill="none" stroke="#c9c3a6" stroke-width="1.2"/></g></svg>
<svg style="left:3386px;top:1116.3px;overflow:hidden;" width="133.9" height="83.2" viewBox="0 0 133.9 83.2" preserveAspectRatio="none"><g filter="url(#pb)"><rect width="134" height="84" fill="#9c9ad2"/><rect x="0" y="8" width="134" height="30" fill="#f6f6fa"/><rect x="0" y="0" width="134" height="8" fill="#8a88c4"/><path d="M32 19 L121 0 L132 35 L64 68 Z" fill="#f08a2a" stroke="#6a4a2a" stroke-width="1"/><path d="M34 27 L120 8 L128 29 L60 54 Z" fill="#c8ccb4"/><path d="M45 33 L112 15 M48 42 L118 24" stroke="#9a9e8a" stroke-width="3"/><path d="M0 52 Q18 40 40 42 Q58 44 66 52 Q68 62 60 66 L68 84 H0 Z" fill="#e2a890" stroke="#6a4a3a" stroke-width="1.2"/><path d="M40 56 Q52 50 62 54" fill="none" stroke="#a87060" stroke-width="1.5"/><rect x="2" y="2" width="18" height="18" fill="#ebe5d6"/><text x="11.0" y="14.959999999999999" font-family="Liberation Sans" font-size="9.9" fill="#8a8478" text-anchor="middle">D</text><rect x="0.5" y="0.5" width="132.9" height="82.2" fill="none" stroke="#c9c3a6" stroke-width="1.2"/></g></svg>
<svg style="left:2957.4px;top:1211px;overflow:hidden;" width="134" height="83.2" viewBox="0 0 134 83.2" preserveAspectRatio="none"><g filter="url(#pb)"><rect width="134" height="84" fill="#f4ee9e"/><text transform="translate(2 52.3) scale(0.62 1)" font-family="Liberation Sans" font-size="34.3" fill="#1a5a40">A</text><path d="M18 40.4 H117.4" stroke="#7e1a5e" stroke-width="4.5"/><circle cx="68.5" cy="40.4" r="5.5" fill="#fff" stroke="#7e1a5e" stroke-width="3.2"/><path d="M39 13.6 L58 28" stroke="#d88a82" stroke-width="3.2"/><path d="M53 31 L64 33 L60 23 Z" fill="#d88a82"/><text transform="translate(120.6 52.3) scale(0.62 1)" font-family="Liberation Sans" font-size="34.3" fill="#1a5a40">B</text><rect x="2" y="2" width="18" height="18" fill="#ebe5d6"/><text x="11.0" y="14.959999999999999" font-family="Liberation Sans" font-size="9.9" fill="#8a8478" text-anchor="middle">E</text><rect x="0.5" y="0.5" width="133" height="82.2" fill="none" stroke="#c9c3a6" stroke-width="1.2"/></g></svg>
<svg style="left:3101.2px;top:1211px;overflow:hidden;" width="132.6" height="83.2" viewBox="0 0 132.6 83.2" preserveAspectRatio="none"><g filter="url(#pb)"><rect width="134" height="84" fill="#cfc6b4"/><path d="M0 0 H134 V10 Q80 0 20 18 L0 22 Z" fill="#bcb4a4"/><rect x="0" y="18" width="25" height="66" fill="#5a88b8"/><rect x="48" y="10" width="28" height="7" fill="#fafafa"/><rect x="61" y="12" width="12" height="3" fill="#e0c030"/><path d="M10 70 V32 Q12 24 24 24 H38 Q46 26 46 34 V70 Z" fill="#3a3a3e"/><rect x="10" y="46" width="36" height="12" fill="#d82a2a"/><path d="M46 30 L72 36 V56 L46 62 Z" fill="#d84040"/><path d="M46 28 L72 35 V40 L46 36 Z" fill="#f0f0f0"/><path d="M12 84 L48 62 H100 L104 72 H56 L36 84 Z" fill="#e8d030"/><path d="M36 84 L56 72 H104 L110 84 Z" fill="#a8b4c0"/><rect x="68" y="38" width="6" height="26" fill="#8a8a8a"/><rect x="80" y="36" width="7" height="30" fill="#7a7a7e"/><rect x="90" y="40" width="5" height="24" fill="#8a8a8e"/><path d="M96 0 H134 V84 H108 Q100 40 96 0 Z" fill="#f2f2f6"/><path d="M96 2 Q104 40 104 84" fill="none" stroke="#6a7ac0" stroke-width="5"/><path d="M120 0 V84" stroke="#8a9ad0" stroke-width="3"/><rect x="2" y="2" width="18" height="18" fill="#ebe5d6"/><text x="11.0" y="14.959999999999999" font-family="Liberation Sans" font-size="9.9" fill="#8a8478" text-anchor="middle">F</text><rect x="0.5" y="0.5" width="131.6" height="82.2" fill="none" stroke="#c9c3a6" stroke-width="1.2"/></g></svg>
<svg style="left:3243.5px;top:1211px;overflow:hidden;" width="133.4" height="83.2" viewBox="0 0 133.4 83.2" preserveAspectRatio="none"><g filter="url(#pb)"><rect width="134" height="84" fill="#dcd0bc"/><path d="M0 12 H134 M0 26 H134" stroke="#c8bca6" stroke-width="1.5"/><rect x="0" y="47.5" width="134" height="37" fill="#b89a78"/><rect x="12.8" y="28.6" width="11" height="22" fill="#6a94d0"/><rect x="28.6" y="3.3" width="79.8" height="81" fill="#4a78c0"/><rect x="34" y="9.6" width="69.7" height="75" fill="#c8d6e4"/><rect x="34" y="70" width="69.7" height="14" fill="#b0a08a"/><rect x="57" y="22" width="16.7" height="24" fill="#a8286c"/><rect x="59" y="46" width="13" height="27" fill="#3a68b0"/><circle cx="65.8" cy="17" r="4.5" fill="#c89070"/><rect x="74.5" y="24" width="18" height="24" rx="3" fill="#d84468"/><rect x="76" y="48" width="14" height="5" fill="#4a7ac0"/><rect x="77" y="53" width="12" height="20" fill="#e8c0a0"/><circle cx="82.4" cy="20" r="5" fill="#e8d070"/><rect x="54" y="33.3" width="9.4" height="21" fill="#1a8a4a"/><rect x="2" y="2" width="18" height="18" fill="#ebe5d6"/><text x="11.0" y="14.959999999999999" font-family="Liberation Sans" font-size="9.9" fill="#8a8478" text-anchor="middle">G</text><rect x="0.5" y="0.5" width="132.4" height="82.2" fill="none" stroke="#c9c3a6" stroke-width="1.2"/></g></svg>
<svg style="left:3386px;top:1211px;overflow:hidden;" width="133.9" height="83.2" viewBox="0 0 133.9 83.2" preserveAspectRatio="none"><g filter="url(#pb)"><rect width="134" height="84" fill="#f4ee9e"/><text transform="translate(1.5 74.4) scale(0.62 1)" font-family="Liberation Sans" font-size="34.3" fill="#1a5a40">A</text><path d="M18 65.7 H134" stroke="#7e1a5e" stroke-width="4.5"/><path d="M59 16.7 H117.6" stroke="#3ab8d0" stroke-width="3.5"/><path d="M53.6 59 V30" stroke="#d88a82" stroke-width="3.2"/><path d="M47.5 33 L53.6 24 L59.7 33 Z" fill="#d88a82"/><circle cx="53.6" cy="65.7" r="5.5" fill="#fff" stroke="#7e1a5e" stroke-width="3.2"/><circle cx="53.6" cy="16.7" r="5.5" fill="#fff" stroke="#7e1a5e" stroke-width="3.2"/><text transform="translate(120 30) scale(0.62 1)" font-family="Liberation Sans" font-size="31.9" fill="#1a5a40">B</text><rect x="2" y="2" width="18" height="18" fill="#ebe5d6"/><text x="11.0" y="14.959999999999999" font-family="Liberation Sans" font-size="9.9" fill="#8a8478" text-anchor="middle">H</text><rect x="0.5" y="0.5" width="132.9" height="82.2" fill="none" stroke="#c9c3a6" stroke-width="1.2"/></g></svg>
<svg style="left:1832px;top:1046px;" width="16" height="12" viewBox="0 0 16 12"><path d="M1 4 H4 L9 0.5 V11.5 L4 8 H1 Z" fill="#8a8a86"/><path d="M11 3 Q13.5 6 11 9 M13 1.5 Q16.5 6 13 10.5" fill="none" stroke="#8a8a86" stroke-width="1.3"/></svg>
<svg style="left:1851px;top:1046px;" width="18" height="14" viewBox="0 0 18 14"><circle cx="5" cy="3.5" r="3" fill="#8a8a86"/><circle cx="13" cy="3.5" r="3" fill="#8a8a86"/><path d="M0 13 Q0 7 5 7 Q10 7 10 13 Z M8 13 Q8 7 13 7 Q18 7 18 13 Z" fill="#8a8a86"/><path d="M16 0 V4 M14 2 H18" stroke="#8a8a86" stroke-width="1"/></svg>
<svg style="left:1852px;top:1105px;" width="16" height="12" viewBox="0 0 16 12"><path d="M1 4 H4 L9 0.5 V11.5 L4 8 H1 Z" fill="#8a8a86"/><path d="M11 3 Q13.5 6 11 9 M13 1.5 Q16.5 6 13 10.5" fill="none" stroke="#8a8a86" stroke-width="1.3"/></svg>
<svg style="left:1851px;top:1341px;" width="18" height="14" viewBox="0 0 18 14"><circle cx="5" cy="3.5" r="3" fill="#8a8a86"/><circle cx="13" cy="3.5" r="3" fill="#8a8a86"/><path d="M0 13 Q0 7 5 7 Q10 7 10 13 Z M8 13 Q8 7 13 7 Q18 7 18 13 Z" fill="#8a8a86"/><path d="M16 0 V4 M14 2 H18" stroke="#8a8a86" stroke-width="1"/></svg>
<div style="position:absolute;left:1707.5px;top:1852px;width:1.5px;height:86px;background:#c9cdd3;"></div>
<div style="position:absolute;left:2547.3px;top:1852px;width:1.5px;height:86px;background:#c9cdd3;"></div>
<svg style="left:1596px;top:1878px;" width="46" height="36" viewBox="0 0 46 36"><rect x="1" y="1" width="20" height="34" rx="2.5" fill="#141618"/><rect x="24.8" y="1" width="20" height="34" rx="2.5" fill="#141618"/><path d="M5 12 H17 M5 18.5 H17 M5 24.5 H14 M28.8 12 H40.8 M28.8 18.5 H40.8 M28.8 24.5 H38" stroke="#8a8d92" stroke-width="3"/></svg>
<svg style="left:1675.5px;top:1892.5px;" width="16" height="9" viewBox="0 0 16 9"><path d="M1 1 L8 7.5 L15 1" fill="none" stroke="#2d3440" stroke-width="2.4"/></svg>
<svg style="left:1736px;top:1875px;" width="41" height="44" viewBox="0 0 41 44"><path d="M7 24 L13 28 L9 12 Q9 7 13 8 L18 22 L16 4 Q17 0 21 2 L24 20 L25 5 Q27 2 30 4 L30 21 L34 10 Q37 8 38 12 L33 34 Q30 42 22 42 L16 42 Q12 41 10 38 L1 30 Q0 26 3 25 Q5 24 7 24 Z" fill="none" stroke="#141618" stroke-width="2.4" stroke-linejoin="round"/><path d="M22 6 L24 20" stroke="#888" stroke-width="3"/></svg>
<svg style="left:1834px;top:1876px;" width="41" height="39" viewBox="0 0 41 39"><path d="M0.5 36.5 H14" stroke="#141618" stroke-width="2.4"/><path d="M16 35 L12 37 L13 32 L33 3 Q35 1 37 2.5 L38.5 3.5 Q40 5 39 7 L19 35 Z" fill="none" stroke="#141618" stroke-width="2.4" stroke-linejoin="round"/><path d="M31 6 L36.5 9.5 M13 32 L17 35" stroke="#141618" stroke-width="2"/></svg>
<svg style="left:1910.5px;top:1892.5px;" width="16" height="9" viewBox="0 0 16 9"><path d="M1 1 L8 7.5 L15 1" fill="none" stroke="#2d3440" stroke-width="2.4"/></svg>
<svg style="left:1976px;top:1874px;" width="38" height="43" viewBox="0 0 38 43"><path d="M17 8.5 H2.5 V41 H29 V24" fill="none" stroke="#141618" stroke-width="2.6"/><path d="M28.5 1 V17.5 M20 9 H37" stroke="#141618" stroke-width="2.4"/><path d="M7.5 24.5 H23 M7.5 34 H18" stroke="#8a8d92" stroke-width="2.8"/><path d="M7.5 29.3 H23" stroke="#1f2328" stroke-width="2.4"/></svg>
<svg style="left:2070px;top:1878px;" width="36" height="37" viewBox="0 0 36 37"><path d="M1.5 9 V1.5 H34 V9 M17.8 1.5 V34.5 M10 34.5 H25.5" fill="none" stroke="#141618" stroke-width="2.6"/><path d="M1.5 1.5 H34" stroke="#555" stroke-width="3"/></svg>
<svg style="left:2160px;top:1874px;" width="49" height="43" viewBox="0 0 49 43"><path d="M4.5 9 H47 V41 H4.5 Z M25.5 9 V43" fill="#fff" fill-opacity="0" stroke="#141618" stroke-width="2.6"/><path d="M8 33.5 H15 M29 33.5 H36 M39 14 H43 M39 19.5 H43 M39 25 H43" stroke="#8a8d92" stroke-width="2.6"/><rect x="0.5" y="0.7" width="38.2" height="28" fill="#000"/></svg>
<svg style="left:2256px;top:1874px;" width="49" height="43" viewBox="0 0 49 43"><path d="M1 1 H38.5 V28 H1 Z" fill="none" stroke="#141618" stroke-width="2.4"/><path d="M5.5 9 H48 V41 H5.5 Z M26.5 9 V43" fill="none" stroke="#141618" stroke-width="2.4"/><path d="M10 15 H20 M10 21 H20 M31 15 H35 M31 21 H35" stroke="#8a8d92" stroke-width="2.6"/></svg>
<svg style="left:2339px;top:1880px;" width="54" height="32" viewBox="0 0 54 32"><path d="M1.5 15.7 Q27 -12 52.5 15.7 Q27 43 1.5 15.7 Z" fill="none" stroke="#141618" stroke-width="2.4"/><circle cx="26.8" cy="15.7" r="13" fill="none" stroke="#141618" stroke-width="2.4"/><circle cx="26.8" cy="15.7" r="5.4" fill="#141618"/></svg>
<svg style="left:2432px;top:1874px;" width="52" height="44" viewBox="0 0 52 44"><circle cx="13.8" cy="8.4" r="6.6" fill="none" stroke="#141618" stroke-width="2.4"/><path d="M13 19.5 H8 Q2.6 19.5 2.6 25 V39" fill="none" stroke="#141618" stroke-width="2.4"/><circle cx="25.6" cy="21" r="5.4" fill="none" stroke="#141618" stroke-width="2.4"/><circle cx="41" cy="21" r="5.4" fill="none" stroke="#141618" stroke-width="2.4"/><path d="M17 41.5 V36 Q17 30.5 23 30.5 H28 Q33.5 30.5 33.5 36 V41.5 Z M33.5 41.5 V36 Q33.5 30.5 39 30.5 H44 Q50 30.5 50 36 V41.5 Z" fill="none" stroke="#141618" stroke-width="2.4" stroke-linejoin="round"/></svg>
<svg style="left:2514.5px;top:1892.5px;" width="16" height="9" viewBox="0 0 16 9"><path d="M1 1 L8 7.5 L15 1" fill="none" stroke="#2d3440" stroke-width="2.4"/></svg>
<svg style="left:2630px;top:1874px;" width="26" height="46" viewBox="0 0 26 46"><path d="M2 1.5 H24 V43 L13 33.5 L2 43 Z" fill="none" stroke="#141618" stroke-width="2.6"/></svg>
<svg style="left:2726px;top:1878px;" width="30" height="37" viewBox="0 0 30 37"><path d="M2 1 V35 M27 2 L9.5 18 L27 34" fill="none" stroke="#141618" stroke-width="2.4"/></svg>
<svg style="left:2825px;top:1883px;" width="24" height="40" viewBox="0 0 24 40"><path d="M22 1.5 L2.5 19.5 L22 37.5" fill="none" stroke="#5e5046" stroke-width="2.6"/></svg>
<div style="position:absolute;left:2868.4px;top:1852.7px;width:112.6px;height:84px;background:#fff;"></div>
<div style="position:absolute;left:2913.5px;top:1885.63px;font-family:'Liberation Sans';font-size:26.09px;line-height:26.09px;font-weight:400;font-style:normal;color:#1f2328;white-space:pre;transform:scaleX(0.7927);transform-origin:0 0;">17</div>
<svg style="left:3002px;top:1883px;" width="24" height="40" viewBox="0 0 24 40"><path d="M2 1.5 L21.5 19.5 L2 37.5" fill="none" stroke="#5e5046" stroke-width="2.6"/></svg>
<svg style="left:3094px;top:1878px;" width="30" height="37" viewBox="0 0 30 37"><path d="M28 1 V35 M3 2 L20.5 18 L3 34" fill="none" stroke="#141618" stroke-width="2.4"/></svg>
<svg style="left:3233px;top:1876.5px;" width="41" height="42" viewBox="0 0 41 42"><circle cx="17" cy="17" r="14.5" fill="none" stroke="#141618" stroke-width="2.6"/><path d="M27.5 27.5 L39 40" stroke="#141618" stroke-width="2.8"/><path d="M17 9 V25 M9 17 H25" stroke="#141618" stroke-width="2.6"/></svg>
<svg style="left:3329px;top:1876.5px;" width="41" height="42" viewBox="0 0 41 42"><circle cx="17" cy="17" r="14.5" fill="none" stroke="#141618" stroke-width="2.6"/><path d="M27.5 27.5 L39 40" stroke="#141618" stroke-width="2.8"/><path d="M9 17 H25" stroke="#141618" stroke-width="2.6"/></svg>
<svg style="left:3425px;top:1874px;" width="44" height="43" viewBox="0 0 44 43"><rect x="1.5" y="1.5" width="31" height="40" fill="none" stroke="#3a3d42" stroke-width="2.6" stroke-dasharray="5.5 3"/><circle cx="20" cy="20.5" r="12" fill="#eaedf1" stroke="#141618" stroke-width="2.6"/><path d="M20 13 V28 M12.5 20.5 H27.5" stroke="#141618" stroke-width="2.4"/><path d="M29 29.5 L41 42" stroke="#141618" stroke-width="2.8"/></svg>
<svg style="left:3521px;top:1876px;" width="44" height="44" viewBox="0 0 44 44"><circle cx="17.5" cy="17.5" r="16" fill="none" stroke="#141618" stroke-width="2.6"/><path d="M29 29 L41.5 41.5" stroke="#141618" stroke-width="2.8"/></svg>
<svg style="left:3620px;top:1878px;" width="38" height="37" viewBox="0 0 38 37"><path d="M2 12 V2 H12 M26 2 H36 V12 M36 25 V35 H26 M12 35 H2 V25" fill="none" stroke="#141618" stroke-width="2.8"/></svg>
<svg style="left:3716px;top:1880px;" width="40" height="33" viewBox="0 0 40 33"><path d="M1 2.4 H5.5 M10.5 2.4 H37.5 M10.5 30 H37.5 M1 30 H5.5" stroke="#141618" stroke-width="2.4"/><path d="M1 16 H5.5 M10.5 16 H37.5" stroke="#6d7076" stroke-width="3"/></svg>
<svg style="left:3792px;top:1892px;" width="16" height="9" viewBox="0 0 16 9"><path d="M1 1 L8 7.5 L15 1" fill="none" stroke="#2d3440" stroke-width="2.4"/></svg>
<div style="position:absolute;left:3496px;top:292px;width:277px;height:86px;background:#fff;border-radius:43px;box-shadow:0 2px 8px rgba(60,80,110,0.13);"></div>
<svg style="left:3544px;top:315px;" width="48" height="43" viewBox="0 0 48 43"><path d="M2 2 H45 L29 20 V40 L20 37 V20 Z" fill="none" stroke="#2f6bbf" stroke-width="3" stroke-linejoin="round"/></svg>
<div style="position:absolute;left:3599px;top:320.37px;font-family:'Liberation Sans';font-size:33.91px;line-height:33.91px;font-weight:400;font-style:normal;color:#2f6bbf;white-space:pre;transform:scaleX(1.0218);transform-origin:0 0;">Filter</div>
<svg style="left:3708px;top:328px;" width="33" height="20" viewBox="0 0 33 20"><path d="M1.5 1.5 L16.5 17 L31.5 1.5" fill="none" stroke="#2f6bbf" stroke-width="3"/></svg>
<div style="position:absolute;left:604px;top:127px;width:3221px;height:1813px;box-sizing:border-box;border:3px solid #9a9a9a;border-radius:28px;"></div>
<div style="position:absolute;left:360px;top:345px;width:1282px;height:373px;box-sizing:border-box;background:#fff;border:10.5px solid #e20613;border-radius:42px;"></div>
<div style="position:absolute;left:424.5px;top:407px;width:252px;height:252px;background:#f2aec8;border-radius:20px;"></div>
<svg style="left:480px;top:465px;" width="140" height="115" viewBox="0 0 140 115"><path d="M20.6 96 V41 Q44 30 67.5 42.5 V100" fill="none" stroke="#951552" stroke-width="4.6" stroke-linejoin="round"/><path d="M20.6 96 Q44 84 69 100 Q95 84 119.4 96 V36" fill="none" stroke="#951552" stroke-width="4.6" stroke-linejoin="round" stroke-linecap="round"/><path d="M80.9 39.2 L106.2 16.7 V61.2 L80.9 81.3 Z" fill="#951552"/></svg>
<div style="position:absolute;left:736px;top:416.07px;font-family:'Liberation Sans';font-size:53.33px;line-height:53.33px;font-weight:700;font-style:normal;color:#2d3134;white-space:pre;transform:scaleX(0.9390);transform-origin:0 0;">KI-Material-Designer</div>
<div style="position:absolute;left:1453px;top:408px;width:142px;height:70px;box-sizing:border-box;border:3px solid #2d3033;border-radius:35px;"></div>
<div style="position:absolute;left:1484px;top:420.64px;font-family:'Liberation Sans';font-size:43.48px;line-height:43.48px;font-weight:400;font-style:normal;color:#2d3033;white-space:pre;transform:scaleX(0.8835);transform-origin:0 0;">Beta</div>
<div style="position:absolute;left:735px;top:499.41px;font-family:'Liberation Sans';font-size:53.04px;line-height:53.04px;font-weight:400;font-style:normal;color:#2d3134;white-space:pre;transform:scaleX(0.9705);transform-origin:0 0;">Schnell passendes, differenziertes</div>
<div style="position:absolute;left:735px;top:568.71px;font-family:'Liberation Sans';font-size:53.04px;line-height:53.04px;font-weight:400;font-style:normal;color:#2d3134;white-space:pre;transform:scaleX(0.9796);transform-origin:0 0;">Material erstellen.</div>
</body></html>
